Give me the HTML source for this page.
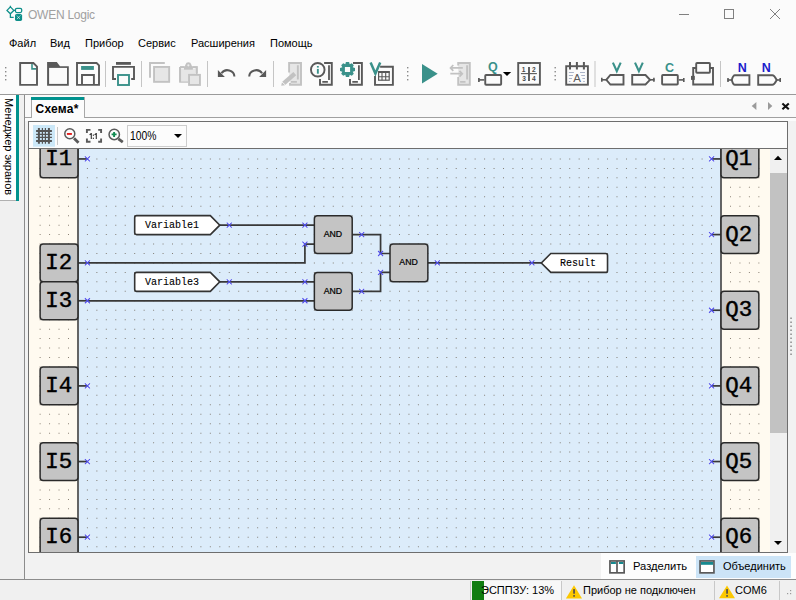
<!DOCTYPE html>
<html><head><meta charset="utf-8">
<style>
html,body{margin:0;padding:0;}
body{width:796px;height:600px;overflow:hidden;position:relative;background:#f0f0f0;font-family:"Liberation Sans",sans-serif;font-size:11px;color:#000;}
.a{position:absolute;white-space:nowrap;}
svg{position:absolute;left:0;top:0;}
.and{font-family:"Liberation Sans",sans-serif;font-size:9.4px;text-anchor:middle;fill:#000;stroke:#000;stroke-width:0.25px;}
.io{font-family:"Liberation Mono",monospace;font-size:21.6px;text-anchor:middle;fill:#000;stroke:#000;stroke-width:0.4px;}
.var{font-family:"Liberation Mono",monospace;font-size:10px;fill:#000;stroke:#000;stroke-width:0.1px;}
</style></head><body>
<!-- top chrome bg -->
<div class="a" style="left:0;top:0;width:796px;height:94px;background:#fbfbfb"></div>
<div class="a" style="left:0;top:93.8px;width:796px;height:1.4px;background:#9a9a9a"></div>
<!-- title -->
<div class="a" style="left:28px;top:8px;font-size:12px;color:#a0a0a0;letter-spacing:-0.25px">OWEN Logic</div>
<!-- menu -->
<div class="a" style="left:9px;top:37px">Файл</div>
<div class="a" style="left:50px;top:37px">Вид</div>
<div class="a" style="left:85px;top:37px">Прибор</div>
<div class="a" style="left:138px;top:37px">Сервис</div>
<div class="a" style="left:191px;top:37px">Расширения</div>
<div class="a" style="left:270px;top:37px">Помощь</div>

<!-- left side panel tab -->
<div class="a" style="left:0;top:95px;width:16px;height:105px;background:#fff;border-bottom:1px solid #b0b0b0"></div>
<div class="a" style="left:16px;top:95px;width:3px;height:106px;background:#00928e"></div>
<div class="a" style="left:3.2px;top:98px;width:12px;height:98px;"><div style="position:absolute;left:12px;top:0;transform-origin:0 0;transform:rotate(90deg);font-size:11px;white-space:nowrap">Менеджер экранов</div></div>

<!-- document area -->
<div class="a" style="left:23.6px;top:95px;width:772px;height:484.5px;background:#f2f2f2;border-left:1.2px solid #8c8c8c"></div>
<!-- tab strip -->
<div class="a" style="left:25px;top:95px;width:771px;height:22px;background:#f9f9f9"></div>
<div class="a" style="left:25px;top:117px;width:771px;height:1px;background:#a0a0a0"></div>
<div class="a" style="left:25px;top:118px;width:771px;height:3px;background:#fcfcfc"></div>
<!-- tab -->
<div class="a" style="left:31px;top:97px;width:52px;height:21px;background:#fcfcfc;border-right:1px solid #a8a8a8;border-left:1px solid #a8a8a8"></div>
<div class="a" style="left:31px;top:97px;width:53px;height:3px;background:#00928e"></div>
<div class="a" style="left:35.5px;top:101.7px;font-weight:bold;font-size:12px;letter-spacing:0.25px">Схема*</div>

<!-- inner frame -->
<div class="a" style="left:28px;top:121px;width:758px;height:430px;border:1px solid #6e6e6e;background:#fcfcfc"></div>
<div class="a" style="left:29px;top:148px;width:758px;height:1px;background:#6e6e6e"></div>
<!-- canvas columns -->
<div class="a" style="left:29px;top:149px;width:49px;height:403px;background:#fffaf0"></div>
<div class="a" style="left:78px;top:149px;width:643px;height:403px;background:#dcecfa"></div>
<div class="a" style="left:721px;top:149px;width:49px;height:403px;background:#fffaf0"></div>
<div class="a" style="left:770px;top:149px;width:17px;height:403px;background:#f0f0f0"></div>
<div class="a" style="left:770px;top:173px;width:17px;height:260px;background:#c2c2c2"></div>

<svg width="796" height="600" viewBox="0 0 796 600">
<defs><clipPath id="cv"><rect x="29" y="149" width="741" height="403"/></clipPath></defs>
<g clip-path="url(#cv)">
<line x1="78" y1="149" x2="78" y2="552" stroke="#555" stroke-width="1.8"/>
<line x1="721" y1="149" x2="721" y2="552" stroke="#555" stroke-width="1.8"/>
<path d="M86.9 158.43h1v1h-1zM86.9 167.89h1v1h-1zM86.9 177.34h1v1h-1zM86.9 186.8h1v1h-1zM86.9 196.26h1v1h-1zM86.9 205.71h1v1h-1zM86.9 215.17h1v1h-1zM86.9 224.63h1v1h-1zM86.9 234.09h1v1h-1zM86.9 243.54h1v1h-1zM86.9 253h1v1h-1zM86.9 262.46h1v1h-1zM86.9 271.91h1v1h-1zM86.9 281.37h1v1h-1zM86.9 290.83h1v1h-1zM86.9 300.28h1v1h-1zM86.9 309.74h1v1h-1zM86.9 319.2h1v1h-1zM86.9 328.66h1v1h-1zM86.9 338.11h1v1h-1zM86.9 347.57h1v1h-1zM86.9 357.03h1v1h-1zM86.9 366.48h1v1h-1zM86.9 375.94h1v1h-1zM86.9 385.4h1v1h-1zM86.9 394.85h1v1h-1zM86.9 404.31h1v1h-1zM86.9 413.77h1v1h-1zM86.9 423.23h1v1h-1zM86.9 432.68h1v1h-1zM86.9 442.14h1v1h-1zM86.9 451.6h1v1h-1zM86.9 461.05h1v1h-1zM86.9 470.51h1v1h-1zM86.9 479.97h1v1h-1zM86.9 489.42h1v1h-1zM86.9 498.88h1v1h-1zM86.9 508.34h1v1h-1zM86.9 517.8h1v1h-1zM86.9 527.25h1v1h-1zM86.9 536.71h1v1h-1zM86.9 546.17h1v1h-1zM96.36 158.43h1v1h-1zM96.36 167.89h1v1h-1zM96.36 177.34h1v1h-1zM96.36 186.8h1v1h-1zM96.36 196.26h1v1h-1zM96.36 205.71h1v1h-1zM96.36 215.17h1v1h-1zM96.36 224.63h1v1h-1zM96.36 234.09h1v1h-1zM96.36 243.54h1v1h-1zM96.36 253h1v1h-1zM96.36 262.46h1v1h-1zM96.36 271.91h1v1h-1zM96.36 281.37h1v1h-1zM96.36 290.83h1v1h-1zM96.36 300.28h1v1h-1zM96.36 309.74h1v1h-1zM96.36 319.2h1v1h-1zM96.36 328.66h1v1h-1zM96.36 338.11h1v1h-1zM96.36 347.57h1v1h-1zM96.36 357.03h1v1h-1zM96.36 366.48h1v1h-1zM96.36 375.94h1v1h-1zM96.36 385.4h1v1h-1zM96.36 394.85h1v1h-1zM96.36 404.31h1v1h-1zM96.36 413.77h1v1h-1zM96.36 423.23h1v1h-1zM96.36 432.68h1v1h-1zM96.36 442.14h1v1h-1zM96.36 451.6h1v1h-1zM96.36 461.05h1v1h-1zM96.36 470.51h1v1h-1zM96.36 479.97h1v1h-1zM96.36 489.42h1v1h-1zM96.36 498.88h1v1h-1zM96.36 508.34h1v1h-1zM96.36 517.8h1v1h-1zM96.36 527.25h1v1h-1zM96.36 536.71h1v1h-1zM96.36 546.17h1v1h-1zM105.81 158.43h1v1h-1zM105.81 167.89h1v1h-1zM105.81 177.34h1v1h-1zM105.81 186.8h1v1h-1zM105.81 196.26h1v1h-1zM105.81 205.71h1v1h-1zM105.81 215.17h1v1h-1zM105.81 224.63h1v1h-1zM105.81 234.09h1v1h-1zM105.81 243.54h1v1h-1zM105.81 253h1v1h-1zM105.81 262.46h1v1h-1zM105.81 271.91h1v1h-1zM105.81 281.37h1v1h-1zM105.81 290.83h1v1h-1zM105.81 300.28h1v1h-1zM105.81 309.74h1v1h-1zM105.81 319.2h1v1h-1zM105.81 328.66h1v1h-1zM105.81 338.11h1v1h-1zM105.81 347.57h1v1h-1zM105.81 357.03h1v1h-1zM105.81 366.48h1v1h-1zM105.81 375.94h1v1h-1zM105.81 385.4h1v1h-1zM105.81 394.85h1v1h-1zM105.81 404.31h1v1h-1zM105.81 413.77h1v1h-1zM105.81 423.23h1v1h-1zM105.81 432.68h1v1h-1zM105.81 442.14h1v1h-1zM105.81 451.6h1v1h-1zM105.81 461.05h1v1h-1zM105.81 470.51h1v1h-1zM105.81 479.97h1v1h-1zM105.81 489.42h1v1h-1zM105.81 498.88h1v1h-1zM105.81 508.34h1v1h-1zM105.81 517.8h1v1h-1zM105.81 527.25h1v1h-1zM105.81 536.71h1v1h-1zM105.81 546.17h1v1h-1zM115.27 158.43h1v1h-1zM115.27 167.89h1v1h-1zM115.27 177.34h1v1h-1zM115.27 186.8h1v1h-1zM115.27 196.26h1v1h-1zM115.27 205.71h1v1h-1zM115.27 215.17h1v1h-1zM115.27 224.63h1v1h-1zM115.27 234.09h1v1h-1zM115.27 243.54h1v1h-1zM115.27 253h1v1h-1zM115.27 262.46h1v1h-1zM115.27 271.91h1v1h-1zM115.27 281.37h1v1h-1zM115.27 290.83h1v1h-1zM115.27 300.28h1v1h-1zM115.27 309.74h1v1h-1zM115.27 319.2h1v1h-1zM115.27 328.66h1v1h-1zM115.27 338.11h1v1h-1zM115.27 347.57h1v1h-1zM115.27 357.03h1v1h-1zM115.27 366.48h1v1h-1zM115.27 375.94h1v1h-1zM115.27 385.4h1v1h-1zM115.27 394.85h1v1h-1zM115.27 404.31h1v1h-1zM115.27 413.77h1v1h-1zM115.27 423.23h1v1h-1zM115.27 432.68h1v1h-1zM115.27 442.14h1v1h-1zM115.27 451.6h1v1h-1zM115.27 461.05h1v1h-1zM115.27 470.51h1v1h-1zM115.27 479.97h1v1h-1zM115.27 489.42h1v1h-1zM115.27 498.88h1v1h-1zM115.27 508.34h1v1h-1zM115.27 517.8h1v1h-1zM115.27 527.25h1v1h-1zM115.27 536.71h1v1h-1zM115.27 546.17h1v1h-1zM124.73 158.43h1v1h-1zM124.73 167.89h1v1h-1zM124.73 177.34h1v1h-1zM124.73 186.8h1v1h-1zM124.73 196.26h1v1h-1zM124.73 205.71h1v1h-1zM124.73 215.17h1v1h-1zM124.73 224.63h1v1h-1zM124.73 234.09h1v1h-1zM124.73 243.54h1v1h-1zM124.73 253h1v1h-1zM124.73 262.46h1v1h-1zM124.73 271.91h1v1h-1zM124.73 281.37h1v1h-1zM124.73 290.83h1v1h-1zM124.73 300.28h1v1h-1zM124.73 309.74h1v1h-1zM124.73 319.2h1v1h-1zM124.73 328.66h1v1h-1zM124.73 338.11h1v1h-1zM124.73 347.57h1v1h-1zM124.73 357.03h1v1h-1zM124.73 366.48h1v1h-1zM124.73 375.94h1v1h-1zM124.73 385.4h1v1h-1zM124.73 394.85h1v1h-1zM124.73 404.31h1v1h-1zM124.73 413.77h1v1h-1zM124.73 423.23h1v1h-1zM124.73 432.68h1v1h-1zM124.73 442.14h1v1h-1zM124.73 451.6h1v1h-1zM124.73 461.05h1v1h-1zM124.73 470.51h1v1h-1zM124.73 479.97h1v1h-1zM124.73 489.42h1v1h-1zM124.73 498.88h1v1h-1zM124.73 508.34h1v1h-1zM124.73 517.8h1v1h-1zM124.73 527.25h1v1h-1zM124.73 536.71h1v1h-1zM124.73 546.17h1v1h-1zM134.19 158.43h1v1h-1zM134.19 167.89h1v1h-1zM134.19 177.34h1v1h-1zM134.19 186.8h1v1h-1zM134.19 196.26h1v1h-1zM134.19 205.71h1v1h-1zM134.19 215.17h1v1h-1zM134.19 224.63h1v1h-1zM134.19 234.09h1v1h-1zM134.19 243.54h1v1h-1zM134.19 253h1v1h-1zM134.19 262.46h1v1h-1zM134.19 271.91h1v1h-1zM134.19 281.37h1v1h-1zM134.19 290.83h1v1h-1zM134.19 300.28h1v1h-1zM134.19 309.74h1v1h-1zM134.19 319.2h1v1h-1zM134.19 328.66h1v1h-1zM134.19 338.11h1v1h-1zM134.19 347.57h1v1h-1zM134.19 357.03h1v1h-1zM134.19 366.48h1v1h-1zM134.19 375.94h1v1h-1zM134.19 385.4h1v1h-1zM134.19 394.85h1v1h-1zM134.19 404.31h1v1h-1zM134.19 413.77h1v1h-1zM134.19 423.23h1v1h-1zM134.19 432.68h1v1h-1zM134.19 442.14h1v1h-1zM134.19 451.6h1v1h-1zM134.19 461.05h1v1h-1zM134.19 470.51h1v1h-1zM134.19 479.97h1v1h-1zM134.19 489.42h1v1h-1zM134.19 498.88h1v1h-1zM134.19 508.34h1v1h-1zM134.19 517.8h1v1h-1zM134.19 527.25h1v1h-1zM134.19 536.71h1v1h-1zM134.19 546.17h1v1h-1zM143.64 158.43h1v1h-1zM143.64 167.89h1v1h-1zM143.64 177.34h1v1h-1zM143.64 186.8h1v1h-1zM143.64 196.26h1v1h-1zM143.64 205.71h1v1h-1zM143.64 215.17h1v1h-1zM143.64 224.63h1v1h-1zM143.64 234.09h1v1h-1zM143.64 243.54h1v1h-1zM143.64 253h1v1h-1zM143.64 262.46h1v1h-1zM143.64 271.91h1v1h-1zM143.64 281.37h1v1h-1zM143.64 290.83h1v1h-1zM143.64 300.28h1v1h-1zM143.64 309.74h1v1h-1zM143.64 319.2h1v1h-1zM143.64 328.66h1v1h-1zM143.64 338.11h1v1h-1zM143.64 347.57h1v1h-1zM143.64 357.03h1v1h-1zM143.64 366.48h1v1h-1zM143.64 375.94h1v1h-1zM143.64 385.4h1v1h-1zM143.64 394.85h1v1h-1zM143.64 404.31h1v1h-1zM143.64 413.77h1v1h-1zM143.64 423.23h1v1h-1zM143.64 432.68h1v1h-1zM143.64 442.14h1v1h-1zM143.64 451.6h1v1h-1zM143.64 461.05h1v1h-1zM143.64 470.51h1v1h-1zM143.64 479.97h1v1h-1zM143.64 489.42h1v1h-1zM143.64 498.88h1v1h-1zM143.64 508.34h1v1h-1zM143.64 517.8h1v1h-1zM143.64 527.25h1v1h-1zM143.64 536.71h1v1h-1zM143.64 546.17h1v1h-1zM153.1 158.43h1v1h-1zM153.1 167.89h1v1h-1zM153.1 177.34h1v1h-1zM153.1 186.8h1v1h-1zM153.1 196.26h1v1h-1zM153.1 205.71h1v1h-1zM153.1 215.17h1v1h-1zM153.1 224.63h1v1h-1zM153.1 234.09h1v1h-1zM153.1 243.54h1v1h-1zM153.1 253h1v1h-1zM153.1 262.46h1v1h-1zM153.1 271.91h1v1h-1zM153.1 281.37h1v1h-1zM153.1 290.83h1v1h-1zM153.1 300.28h1v1h-1zM153.1 309.74h1v1h-1zM153.1 319.2h1v1h-1zM153.1 328.66h1v1h-1zM153.1 338.11h1v1h-1zM153.1 347.57h1v1h-1zM153.1 357.03h1v1h-1zM153.1 366.48h1v1h-1zM153.1 375.94h1v1h-1zM153.1 385.4h1v1h-1zM153.1 394.85h1v1h-1zM153.1 404.31h1v1h-1zM153.1 413.77h1v1h-1zM153.1 423.23h1v1h-1zM153.1 432.68h1v1h-1zM153.1 442.14h1v1h-1zM153.1 451.6h1v1h-1zM153.1 461.05h1v1h-1zM153.1 470.51h1v1h-1zM153.1 479.97h1v1h-1zM153.1 489.42h1v1h-1zM153.1 498.88h1v1h-1zM153.1 508.34h1v1h-1zM153.1 517.8h1v1h-1zM153.1 527.25h1v1h-1zM153.1 536.71h1v1h-1zM153.1 546.17h1v1h-1zM162.56 158.43h1v1h-1zM162.56 167.89h1v1h-1zM162.56 177.34h1v1h-1zM162.56 186.8h1v1h-1zM162.56 196.26h1v1h-1zM162.56 205.71h1v1h-1zM162.56 215.17h1v1h-1zM162.56 224.63h1v1h-1zM162.56 234.09h1v1h-1zM162.56 243.54h1v1h-1zM162.56 253h1v1h-1zM162.56 262.46h1v1h-1zM162.56 271.91h1v1h-1zM162.56 281.37h1v1h-1zM162.56 290.83h1v1h-1zM162.56 300.28h1v1h-1zM162.56 309.74h1v1h-1zM162.56 319.2h1v1h-1zM162.56 328.66h1v1h-1zM162.56 338.11h1v1h-1zM162.56 347.57h1v1h-1zM162.56 357.03h1v1h-1zM162.56 366.48h1v1h-1zM162.56 375.94h1v1h-1zM162.56 385.4h1v1h-1zM162.56 394.85h1v1h-1zM162.56 404.31h1v1h-1zM162.56 413.77h1v1h-1zM162.56 423.23h1v1h-1zM162.56 432.68h1v1h-1zM162.56 442.14h1v1h-1zM162.56 451.6h1v1h-1zM162.56 461.05h1v1h-1zM162.56 470.51h1v1h-1zM162.56 479.97h1v1h-1zM162.56 489.42h1v1h-1zM162.56 498.88h1v1h-1zM162.56 508.34h1v1h-1zM162.56 517.8h1v1h-1zM162.56 527.25h1v1h-1zM162.56 536.71h1v1h-1zM162.56 546.17h1v1h-1zM172.01 158.43h1v1h-1zM172.01 167.89h1v1h-1zM172.01 177.34h1v1h-1zM172.01 186.8h1v1h-1zM172.01 196.26h1v1h-1zM172.01 205.71h1v1h-1zM172.01 215.17h1v1h-1zM172.01 224.63h1v1h-1zM172.01 234.09h1v1h-1zM172.01 243.54h1v1h-1zM172.01 253h1v1h-1zM172.01 262.46h1v1h-1zM172.01 271.91h1v1h-1zM172.01 281.37h1v1h-1zM172.01 290.83h1v1h-1zM172.01 300.28h1v1h-1zM172.01 309.74h1v1h-1zM172.01 319.2h1v1h-1zM172.01 328.66h1v1h-1zM172.01 338.11h1v1h-1zM172.01 347.57h1v1h-1zM172.01 357.03h1v1h-1zM172.01 366.48h1v1h-1zM172.01 375.94h1v1h-1zM172.01 385.4h1v1h-1zM172.01 394.85h1v1h-1zM172.01 404.31h1v1h-1zM172.01 413.77h1v1h-1zM172.01 423.23h1v1h-1zM172.01 432.68h1v1h-1zM172.01 442.14h1v1h-1zM172.01 451.6h1v1h-1zM172.01 461.05h1v1h-1zM172.01 470.51h1v1h-1zM172.01 479.97h1v1h-1zM172.01 489.42h1v1h-1zM172.01 498.88h1v1h-1zM172.01 508.34h1v1h-1zM172.01 517.8h1v1h-1zM172.01 527.25h1v1h-1zM172.01 536.71h1v1h-1zM172.01 546.17h1v1h-1zM181.47 158.43h1v1h-1zM181.47 167.89h1v1h-1zM181.47 177.34h1v1h-1zM181.47 186.8h1v1h-1zM181.47 196.26h1v1h-1zM181.47 205.71h1v1h-1zM181.47 215.17h1v1h-1zM181.47 224.63h1v1h-1zM181.47 234.09h1v1h-1zM181.47 243.54h1v1h-1zM181.47 253h1v1h-1zM181.47 262.46h1v1h-1zM181.47 271.91h1v1h-1zM181.47 281.37h1v1h-1zM181.47 290.83h1v1h-1zM181.47 300.28h1v1h-1zM181.47 309.74h1v1h-1zM181.47 319.2h1v1h-1zM181.47 328.66h1v1h-1zM181.47 338.11h1v1h-1zM181.47 347.57h1v1h-1zM181.47 357.03h1v1h-1zM181.47 366.48h1v1h-1zM181.47 375.94h1v1h-1zM181.47 385.4h1v1h-1zM181.47 394.85h1v1h-1zM181.47 404.31h1v1h-1zM181.47 413.77h1v1h-1zM181.47 423.23h1v1h-1zM181.47 432.68h1v1h-1zM181.47 442.14h1v1h-1zM181.47 451.6h1v1h-1zM181.47 461.05h1v1h-1zM181.47 470.51h1v1h-1zM181.47 479.97h1v1h-1zM181.47 489.42h1v1h-1zM181.47 498.88h1v1h-1zM181.47 508.34h1v1h-1zM181.47 517.8h1v1h-1zM181.47 527.25h1v1h-1zM181.47 536.71h1v1h-1zM181.47 546.17h1v1h-1zM190.93 158.43h1v1h-1zM190.93 167.89h1v1h-1zM190.93 177.34h1v1h-1zM190.93 186.8h1v1h-1zM190.93 196.26h1v1h-1zM190.93 205.71h1v1h-1zM190.93 215.17h1v1h-1zM190.93 224.63h1v1h-1zM190.93 234.09h1v1h-1zM190.93 243.54h1v1h-1zM190.93 253h1v1h-1zM190.93 262.46h1v1h-1zM190.93 271.91h1v1h-1zM190.93 281.37h1v1h-1zM190.93 290.83h1v1h-1zM190.93 300.28h1v1h-1zM190.93 309.74h1v1h-1zM190.93 319.2h1v1h-1zM190.93 328.66h1v1h-1zM190.93 338.11h1v1h-1zM190.93 347.57h1v1h-1zM190.93 357.03h1v1h-1zM190.93 366.48h1v1h-1zM190.93 375.94h1v1h-1zM190.93 385.4h1v1h-1zM190.93 394.85h1v1h-1zM190.93 404.31h1v1h-1zM190.93 413.77h1v1h-1zM190.93 423.23h1v1h-1zM190.93 432.68h1v1h-1zM190.93 442.14h1v1h-1zM190.93 451.6h1v1h-1zM190.93 461.05h1v1h-1zM190.93 470.51h1v1h-1zM190.93 479.97h1v1h-1zM190.93 489.42h1v1h-1zM190.93 498.88h1v1h-1zM190.93 508.34h1v1h-1zM190.93 517.8h1v1h-1zM190.93 527.25h1v1h-1zM190.93 536.71h1v1h-1zM190.93 546.17h1v1h-1zM200.38 158.43h1v1h-1zM200.38 167.89h1v1h-1zM200.38 177.34h1v1h-1zM200.38 186.8h1v1h-1zM200.38 196.26h1v1h-1zM200.38 205.71h1v1h-1zM200.38 215.17h1v1h-1zM200.38 224.63h1v1h-1zM200.38 234.09h1v1h-1zM200.38 243.54h1v1h-1zM200.38 253h1v1h-1zM200.38 262.46h1v1h-1zM200.38 271.91h1v1h-1zM200.38 281.37h1v1h-1zM200.38 290.83h1v1h-1zM200.38 300.28h1v1h-1zM200.38 309.74h1v1h-1zM200.38 319.2h1v1h-1zM200.38 328.66h1v1h-1zM200.38 338.11h1v1h-1zM200.38 347.57h1v1h-1zM200.38 357.03h1v1h-1zM200.38 366.48h1v1h-1zM200.38 375.94h1v1h-1zM200.38 385.4h1v1h-1zM200.38 394.85h1v1h-1zM200.38 404.31h1v1h-1zM200.38 413.77h1v1h-1zM200.38 423.23h1v1h-1zM200.38 432.68h1v1h-1zM200.38 442.14h1v1h-1zM200.38 451.6h1v1h-1zM200.38 461.05h1v1h-1zM200.38 470.51h1v1h-1zM200.38 479.97h1v1h-1zM200.38 489.42h1v1h-1zM200.38 498.88h1v1h-1zM200.38 508.34h1v1h-1zM200.38 517.8h1v1h-1zM200.38 527.25h1v1h-1zM200.38 536.71h1v1h-1zM200.38 546.17h1v1h-1zM209.84 158.43h1v1h-1zM209.84 167.89h1v1h-1zM209.84 177.34h1v1h-1zM209.84 186.8h1v1h-1zM209.84 196.26h1v1h-1zM209.84 205.71h1v1h-1zM209.84 215.17h1v1h-1zM209.84 224.63h1v1h-1zM209.84 234.09h1v1h-1zM209.84 243.54h1v1h-1zM209.84 253h1v1h-1zM209.84 262.46h1v1h-1zM209.84 271.91h1v1h-1zM209.84 281.37h1v1h-1zM209.84 290.83h1v1h-1zM209.84 300.28h1v1h-1zM209.84 309.74h1v1h-1zM209.84 319.2h1v1h-1zM209.84 328.66h1v1h-1zM209.84 338.11h1v1h-1zM209.84 347.57h1v1h-1zM209.84 357.03h1v1h-1zM209.84 366.48h1v1h-1zM209.84 375.94h1v1h-1zM209.84 385.4h1v1h-1zM209.84 394.85h1v1h-1zM209.84 404.31h1v1h-1zM209.84 413.77h1v1h-1zM209.84 423.23h1v1h-1zM209.84 432.68h1v1h-1zM209.84 442.14h1v1h-1zM209.84 451.6h1v1h-1zM209.84 461.05h1v1h-1zM209.84 470.51h1v1h-1zM209.84 479.97h1v1h-1zM209.84 489.42h1v1h-1zM209.84 498.88h1v1h-1zM209.84 508.34h1v1h-1zM209.84 517.8h1v1h-1zM209.84 527.25h1v1h-1zM209.84 536.71h1v1h-1zM209.84 546.17h1v1h-1zM219.3 158.43h1v1h-1zM219.3 167.89h1v1h-1zM219.3 177.34h1v1h-1zM219.3 186.8h1v1h-1zM219.3 196.26h1v1h-1zM219.3 205.71h1v1h-1zM219.3 215.17h1v1h-1zM219.3 224.63h1v1h-1zM219.3 234.09h1v1h-1zM219.3 243.54h1v1h-1zM219.3 253h1v1h-1zM219.3 262.46h1v1h-1zM219.3 271.91h1v1h-1zM219.3 281.37h1v1h-1zM219.3 290.83h1v1h-1zM219.3 300.28h1v1h-1zM219.3 309.74h1v1h-1zM219.3 319.2h1v1h-1zM219.3 328.66h1v1h-1zM219.3 338.11h1v1h-1zM219.3 347.57h1v1h-1zM219.3 357.03h1v1h-1zM219.3 366.48h1v1h-1zM219.3 375.94h1v1h-1zM219.3 385.4h1v1h-1zM219.3 394.85h1v1h-1zM219.3 404.31h1v1h-1zM219.3 413.77h1v1h-1zM219.3 423.23h1v1h-1zM219.3 432.68h1v1h-1zM219.3 442.14h1v1h-1zM219.3 451.6h1v1h-1zM219.3 461.05h1v1h-1zM219.3 470.51h1v1h-1zM219.3 479.97h1v1h-1zM219.3 489.42h1v1h-1zM219.3 498.88h1v1h-1zM219.3 508.34h1v1h-1zM219.3 517.8h1v1h-1zM219.3 527.25h1v1h-1zM219.3 536.71h1v1h-1zM219.3 546.17h1v1h-1zM228.76 158.43h1v1h-1zM228.76 167.89h1v1h-1zM228.76 177.34h1v1h-1zM228.76 186.8h1v1h-1zM228.76 196.26h1v1h-1zM228.76 205.71h1v1h-1zM228.76 215.17h1v1h-1zM228.76 224.63h1v1h-1zM228.76 234.09h1v1h-1zM228.76 243.54h1v1h-1zM228.76 253h1v1h-1zM228.76 262.46h1v1h-1zM228.76 271.91h1v1h-1zM228.76 281.37h1v1h-1zM228.76 290.83h1v1h-1zM228.76 300.28h1v1h-1zM228.76 309.74h1v1h-1zM228.76 319.2h1v1h-1zM228.76 328.66h1v1h-1zM228.76 338.11h1v1h-1zM228.76 347.57h1v1h-1zM228.76 357.03h1v1h-1zM228.76 366.48h1v1h-1zM228.76 375.94h1v1h-1zM228.76 385.4h1v1h-1zM228.76 394.85h1v1h-1zM228.76 404.31h1v1h-1zM228.76 413.77h1v1h-1zM228.76 423.23h1v1h-1zM228.76 432.68h1v1h-1zM228.76 442.14h1v1h-1zM228.76 451.6h1v1h-1zM228.76 461.05h1v1h-1zM228.76 470.51h1v1h-1zM228.76 479.97h1v1h-1zM228.76 489.42h1v1h-1zM228.76 498.88h1v1h-1zM228.76 508.34h1v1h-1zM228.76 517.8h1v1h-1zM228.76 527.25h1v1h-1zM228.76 536.71h1v1h-1zM228.76 546.17h1v1h-1zM238.21 158.43h1v1h-1zM238.21 167.89h1v1h-1zM238.21 177.34h1v1h-1zM238.21 186.8h1v1h-1zM238.21 196.26h1v1h-1zM238.21 205.71h1v1h-1zM238.21 215.17h1v1h-1zM238.21 224.63h1v1h-1zM238.21 234.09h1v1h-1zM238.21 243.54h1v1h-1zM238.21 253h1v1h-1zM238.21 262.46h1v1h-1zM238.21 271.91h1v1h-1zM238.21 281.37h1v1h-1zM238.21 290.83h1v1h-1zM238.21 300.28h1v1h-1zM238.21 309.74h1v1h-1zM238.21 319.2h1v1h-1zM238.21 328.66h1v1h-1zM238.21 338.11h1v1h-1zM238.21 347.57h1v1h-1zM238.21 357.03h1v1h-1zM238.21 366.48h1v1h-1zM238.21 375.94h1v1h-1zM238.21 385.4h1v1h-1zM238.21 394.85h1v1h-1zM238.21 404.31h1v1h-1zM238.21 413.77h1v1h-1zM238.21 423.23h1v1h-1zM238.21 432.68h1v1h-1zM238.21 442.14h1v1h-1zM238.21 451.6h1v1h-1zM238.21 461.05h1v1h-1zM238.21 470.51h1v1h-1zM238.21 479.97h1v1h-1zM238.21 489.42h1v1h-1zM238.21 498.88h1v1h-1zM238.21 508.34h1v1h-1zM238.21 517.8h1v1h-1zM238.21 527.25h1v1h-1zM238.21 536.71h1v1h-1zM238.21 546.17h1v1h-1zM247.67 158.43h1v1h-1zM247.67 167.89h1v1h-1zM247.67 177.34h1v1h-1zM247.67 186.8h1v1h-1zM247.67 196.26h1v1h-1zM247.67 205.71h1v1h-1zM247.67 215.17h1v1h-1zM247.67 224.63h1v1h-1zM247.67 234.09h1v1h-1zM247.67 243.54h1v1h-1zM247.67 253h1v1h-1zM247.67 262.46h1v1h-1zM247.67 271.91h1v1h-1zM247.67 281.37h1v1h-1zM247.67 290.83h1v1h-1zM247.67 300.28h1v1h-1zM247.67 309.74h1v1h-1zM247.67 319.2h1v1h-1zM247.67 328.66h1v1h-1zM247.67 338.11h1v1h-1zM247.67 347.57h1v1h-1zM247.67 357.03h1v1h-1zM247.67 366.48h1v1h-1zM247.67 375.94h1v1h-1zM247.67 385.4h1v1h-1zM247.67 394.85h1v1h-1zM247.67 404.31h1v1h-1zM247.67 413.77h1v1h-1zM247.67 423.23h1v1h-1zM247.67 432.68h1v1h-1zM247.67 442.14h1v1h-1zM247.67 451.6h1v1h-1zM247.67 461.05h1v1h-1zM247.67 470.51h1v1h-1zM247.67 479.97h1v1h-1zM247.67 489.42h1v1h-1zM247.67 498.88h1v1h-1zM247.67 508.34h1v1h-1zM247.67 517.8h1v1h-1zM247.67 527.25h1v1h-1zM247.67 536.71h1v1h-1zM247.67 546.17h1v1h-1zM257.13 158.43h1v1h-1zM257.13 167.89h1v1h-1zM257.13 177.34h1v1h-1zM257.13 186.8h1v1h-1zM257.13 196.26h1v1h-1zM257.13 205.71h1v1h-1zM257.13 215.17h1v1h-1zM257.13 224.63h1v1h-1zM257.13 234.09h1v1h-1zM257.13 243.54h1v1h-1zM257.13 253h1v1h-1zM257.13 262.46h1v1h-1zM257.13 271.91h1v1h-1zM257.13 281.37h1v1h-1zM257.13 290.83h1v1h-1zM257.13 300.28h1v1h-1zM257.13 309.74h1v1h-1zM257.13 319.2h1v1h-1zM257.13 328.66h1v1h-1zM257.13 338.11h1v1h-1zM257.13 347.57h1v1h-1zM257.13 357.03h1v1h-1zM257.13 366.48h1v1h-1zM257.13 375.94h1v1h-1zM257.13 385.4h1v1h-1zM257.13 394.85h1v1h-1zM257.13 404.31h1v1h-1zM257.13 413.77h1v1h-1zM257.13 423.23h1v1h-1zM257.13 432.68h1v1h-1zM257.13 442.14h1v1h-1zM257.13 451.6h1v1h-1zM257.13 461.05h1v1h-1zM257.13 470.51h1v1h-1zM257.13 479.97h1v1h-1zM257.13 489.42h1v1h-1zM257.13 498.88h1v1h-1zM257.13 508.34h1v1h-1zM257.13 517.8h1v1h-1zM257.13 527.25h1v1h-1zM257.13 536.71h1v1h-1zM257.13 546.17h1v1h-1zM266.58 158.43h1v1h-1zM266.58 167.89h1v1h-1zM266.58 177.34h1v1h-1zM266.58 186.8h1v1h-1zM266.58 196.26h1v1h-1zM266.58 205.71h1v1h-1zM266.58 215.17h1v1h-1zM266.58 224.63h1v1h-1zM266.58 234.09h1v1h-1zM266.58 243.54h1v1h-1zM266.58 253h1v1h-1zM266.58 262.46h1v1h-1zM266.58 271.91h1v1h-1zM266.58 281.37h1v1h-1zM266.58 290.83h1v1h-1zM266.58 300.28h1v1h-1zM266.58 309.74h1v1h-1zM266.58 319.2h1v1h-1zM266.58 328.66h1v1h-1zM266.58 338.11h1v1h-1zM266.58 347.57h1v1h-1zM266.58 357.03h1v1h-1zM266.58 366.48h1v1h-1zM266.58 375.94h1v1h-1zM266.58 385.4h1v1h-1zM266.58 394.85h1v1h-1zM266.58 404.31h1v1h-1zM266.58 413.77h1v1h-1zM266.58 423.23h1v1h-1zM266.58 432.68h1v1h-1zM266.58 442.14h1v1h-1zM266.58 451.6h1v1h-1zM266.58 461.05h1v1h-1zM266.58 470.51h1v1h-1zM266.58 479.97h1v1h-1zM266.58 489.42h1v1h-1zM266.58 498.88h1v1h-1zM266.58 508.34h1v1h-1zM266.58 517.8h1v1h-1zM266.58 527.25h1v1h-1zM266.58 536.71h1v1h-1zM266.58 546.17h1v1h-1zM276.04 158.43h1v1h-1zM276.04 167.89h1v1h-1zM276.04 177.34h1v1h-1zM276.04 186.8h1v1h-1zM276.04 196.26h1v1h-1zM276.04 205.71h1v1h-1zM276.04 215.17h1v1h-1zM276.04 224.63h1v1h-1zM276.04 234.09h1v1h-1zM276.04 243.54h1v1h-1zM276.04 253h1v1h-1zM276.04 262.46h1v1h-1zM276.04 271.91h1v1h-1zM276.04 281.37h1v1h-1zM276.04 290.83h1v1h-1zM276.04 300.28h1v1h-1zM276.04 309.74h1v1h-1zM276.04 319.2h1v1h-1zM276.04 328.66h1v1h-1zM276.04 338.11h1v1h-1zM276.04 347.57h1v1h-1zM276.04 357.03h1v1h-1zM276.04 366.48h1v1h-1zM276.04 375.94h1v1h-1zM276.04 385.4h1v1h-1zM276.04 394.85h1v1h-1zM276.04 404.31h1v1h-1zM276.04 413.77h1v1h-1zM276.04 423.23h1v1h-1zM276.04 432.68h1v1h-1zM276.04 442.14h1v1h-1zM276.04 451.6h1v1h-1zM276.04 461.05h1v1h-1zM276.04 470.51h1v1h-1zM276.04 479.97h1v1h-1zM276.04 489.42h1v1h-1zM276.04 498.88h1v1h-1zM276.04 508.34h1v1h-1zM276.04 517.8h1v1h-1zM276.04 527.25h1v1h-1zM276.04 536.71h1v1h-1zM276.04 546.17h1v1h-1zM285.5 158.43h1v1h-1zM285.5 167.89h1v1h-1zM285.5 177.34h1v1h-1zM285.5 186.8h1v1h-1zM285.5 196.26h1v1h-1zM285.5 205.71h1v1h-1zM285.5 215.17h1v1h-1zM285.5 224.63h1v1h-1zM285.5 234.09h1v1h-1zM285.5 243.54h1v1h-1zM285.5 253h1v1h-1zM285.5 262.46h1v1h-1zM285.5 271.91h1v1h-1zM285.5 281.37h1v1h-1zM285.5 290.83h1v1h-1zM285.5 300.28h1v1h-1zM285.5 309.74h1v1h-1zM285.5 319.2h1v1h-1zM285.5 328.66h1v1h-1zM285.5 338.11h1v1h-1zM285.5 347.57h1v1h-1zM285.5 357.03h1v1h-1zM285.5 366.48h1v1h-1zM285.5 375.94h1v1h-1zM285.5 385.4h1v1h-1zM285.5 394.85h1v1h-1zM285.5 404.31h1v1h-1zM285.5 413.77h1v1h-1zM285.5 423.23h1v1h-1zM285.5 432.68h1v1h-1zM285.5 442.14h1v1h-1zM285.5 451.6h1v1h-1zM285.5 461.05h1v1h-1zM285.5 470.51h1v1h-1zM285.5 479.97h1v1h-1zM285.5 489.42h1v1h-1zM285.5 498.88h1v1h-1zM285.5 508.34h1v1h-1zM285.5 517.8h1v1h-1zM285.5 527.25h1v1h-1zM285.5 536.71h1v1h-1zM285.5 546.17h1v1h-1zM294.95 158.43h1v1h-1zM294.95 167.89h1v1h-1zM294.95 177.34h1v1h-1zM294.95 186.8h1v1h-1zM294.95 196.26h1v1h-1zM294.95 205.71h1v1h-1zM294.95 215.17h1v1h-1zM294.95 224.63h1v1h-1zM294.95 234.09h1v1h-1zM294.95 243.54h1v1h-1zM294.95 253h1v1h-1zM294.95 262.46h1v1h-1zM294.95 271.91h1v1h-1zM294.95 281.37h1v1h-1zM294.95 290.83h1v1h-1zM294.95 300.28h1v1h-1zM294.95 309.74h1v1h-1zM294.95 319.2h1v1h-1zM294.95 328.66h1v1h-1zM294.95 338.11h1v1h-1zM294.95 347.57h1v1h-1zM294.95 357.03h1v1h-1zM294.95 366.48h1v1h-1zM294.95 375.94h1v1h-1zM294.95 385.4h1v1h-1zM294.95 394.85h1v1h-1zM294.95 404.31h1v1h-1zM294.95 413.77h1v1h-1zM294.95 423.23h1v1h-1zM294.95 432.68h1v1h-1zM294.95 442.14h1v1h-1zM294.95 451.6h1v1h-1zM294.95 461.05h1v1h-1zM294.95 470.51h1v1h-1zM294.95 479.97h1v1h-1zM294.95 489.42h1v1h-1zM294.95 498.88h1v1h-1zM294.95 508.34h1v1h-1zM294.95 517.8h1v1h-1zM294.95 527.25h1v1h-1zM294.95 536.71h1v1h-1zM294.95 546.17h1v1h-1zM304.41 158.43h1v1h-1zM304.41 167.89h1v1h-1zM304.41 177.34h1v1h-1zM304.41 186.8h1v1h-1zM304.41 196.26h1v1h-1zM304.41 205.71h1v1h-1zM304.41 215.17h1v1h-1zM304.41 224.63h1v1h-1zM304.41 234.09h1v1h-1zM304.41 243.54h1v1h-1zM304.41 253h1v1h-1zM304.41 262.46h1v1h-1zM304.41 271.91h1v1h-1zM304.41 281.37h1v1h-1zM304.41 290.83h1v1h-1zM304.41 300.28h1v1h-1zM304.41 309.74h1v1h-1zM304.41 319.2h1v1h-1zM304.41 328.66h1v1h-1zM304.41 338.11h1v1h-1zM304.41 347.57h1v1h-1zM304.41 357.03h1v1h-1zM304.41 366.48h1v1h-1zM304.41 375.94h1v1h-1zM304.41 385.4h1v1h-1zM304.41 394.85h1v1h-1zM304.41 404.31h1v1h-1zM304.41 413.77h1v1h-1zM304.41 423.23h1v1h-1zM304.41 432.68h1v1h-1zM304.41 442.14h1v1h-1zM304.41 451.6h1v1h-1zM304.41 461.05h1v1h-1zM304.41 470.51h1v1h-1zM304.41 479.97h1v1h-1zM304.41 489.42h1v1h-1zM304.41 498.88h1v1h-1zM304.41 508.34h1v1h-1zM304.41 517.8h1v1h-1zM304.41 527.25h1v1h-1zM304.41 536.71h1v1h-1zM304.41 546.17h1v1h-1zM313.87 158.43h1v1h-1zM313.87 167.89h1v1h-1zM313.87 177.34h1v1h-1zM313.87 186.8h1v1h-1zM313.87 196.26h1v1h-1zM313.87 205.71h1v1h-1zM313.87 215.17h1v1h-1zM313.87 224.63h1v1h-1zM313.87 234.09h1v1h-1zM313.87 243.54h1v1h-1zM313.87 253h1v1h-1zM313.87 262.46h1v1h-1zM313.87 271.91h1v1h-1zM313.87 281.37h1v1h-1zM313.87 290.83h1v1h-1zM313.87 300.28h1v1h-1zM313.87 309.74h1v1h-1zM313.87 319.2h1v1h-1zM313.87 328.66h1v1h-1zM313.87 338.11h1v1h-1zM313.87 347.57h1v1h-1zM313.87 357.03h1v1h-1zM313.87 366.48h1v1h-1zM313.87 375.94h1v1h-1zM313.87 385.4h1v1h-1zM313.87 394.85h1v1h-1zM313.87 404.31h1v1h-1zM313.87 413.77h1v1h-1zM313.87 423.23h1v1h-1zM313.87 432.68h1v1h-1zM313.87 442.14h1v1h-1zM313.87 451.6h1v1h-1zM313.87 461.05h1v1h-1zM313.87 470.51h1v1h-1zM313.87 479.97h1v1h-1zM313.87 489.42h1v1h-1zM313.87 498.88h1v1h-1zM313.87 508.34h1v1h-1zM313.87 517.8h1v1h-1zM313.87 527.25h1v1h-1zM313.87 536.71h1v1h-1zM313.87 546.17h1v1h-1zM323.33 158.43h1v1h-1zM323.33 167.89h1v1h-1zM323.33 177.34h1v1h-1zM323.33 186.8h1v1h-1zM323.33 196.26h1v1h-1zM323.33 205.71h1v1h-1zM323.33 215.17h1v1h-1zM323.33 224.63h1v1h-1zM323.33 234.09h1v1h-1zM323.33 243.54h1v1h-1zM323.33 253h1v1h-1zM323.33 262.46h1v1h-1zM323.33 271.91h1v1h-1zM323.33 281.37h1v1h-1zM323.33 290.83h1v1h-1zM323.33 300.28h1v1h-1zM323.33 309.74h1v1h-1zM323.33 319.2h1v1h-1zM323.33 328.66h1v1h-1zM323.33 338.11h1v1h-1zM323.33 347.57h1v1h-1zM323.33 357.03h1v1h-1zM323.33 366.48h1v1h-1zM323.33 375.94h1v1h-1zM323.33 385.4h1v1h-1zM323.33 394.85h1v1h-1zM323.33 404.31h1v1h-1zM323.33 413.77h1v1h-1zM323.33 423.23h1v1h-1zM323.33 432.68h1v1h-1zM323.33 442.14h1v1h-1zM323.33 451.6h1v1h-1zM323.33 461.05h1v1h-1zM323.33 470.51h1v1h-1zM323.33 479.97h1v1h-1zM323.33 489.42h1v1h-1zM323.33 498.88h1v1h-1zM323.33 508.34h1v1h-1zM323.33 517.8h1v1h-1zM323.33 527.25h1v1h-1zM323.33 536.71h1v1h-1zM323.33 546.17h1v1h-1zM332.78 158.43h1v1h-1zM332.78 167.89h1v1h-1zM332.78 177.34h1v1h-1zM332.78 186.8h1v1h-1zM332.78 196.26h1v1h-1zM332.78 205.71h1v1h-1zM332.78 215.17h1v1h-1zM332.78 224.63h1v1h-1zM332.78 234.09h1v1h-1zM332.78 243.54h1v1h-1zM332.78 253h1v1h-1zM332.78 262.46h1v1h-1zM332.78 271.91h1v1h-1zM332.78 281.37h1v1h-1zM332.78 290.83h1v1h-1zM332.78 300.28h1v1h-1zM332.78 309.74h1v1h-1zM332.78 319.2h1v1h-1zM332.78 328.66h1v1h-1zM332.78 338.11h1v1h-1zM332.78 347.57h1v1h-1zM332.78 357.03h1v1h-1zM332.78 366.48h1v1h-1zM332.78 375.94h1v1h-1zM332.78 385.4h1v1h-1zM332.78 394.85h1v1h-1zM332.78 404.31h1v1h-1zM332.78 413.77h1v1h-1zM332.78 423.23h1v1h-1zM332.78 432.68h1v1h-1zM332.78 442.14h1v1h-1zM332.78 451.6h1v1h-1zM332.78 461.05h1v1h-1zM332.78 470.51h1v1h-1zM332.78 479.97h1v1h-1zM332.78 489.42h1v1h-1zM332.78 498.88h1v1h-1zM332.78 508.34h1v1h-1zM332.78 517.8h1v1h-1zM332.78 527.25h1v1h-1zM332.78 536.71h1v1h-1zM332.78 546.17h1v1h-1zM342.24 158.43h1v1h-1zM342.24 167.89h1v1h-1zM342.24 177.34h1v1h-1zM342.24 186.8h1v1h-1zM342.24 196.26h1v1h-1zM342.24 205.71h1v1h-1zM342.24 215.17h1v1h-1zM342.24 224.63h1v1h-1zM342.24 234.09h1v1h-1zM342.24 243.54h1v1h-1zM342.24 253h1v1h-1zM342.24 262.46h1v1h-1zM342.24 271.91h1v1h-1zM342.24 281.37h1v1h-1zM342.24 290.83h1v1h-1zM342.24 300.28h1v1h-1zM342.24 309.74h1v1h-1zM342.24 319.2h1v1h-1zM342.24 328.66h1v1h-1zM342.24 338.11h1v1h-1zM342.24 347.57h1v1h-1zM342.24 357.03h1v1h-1zM342.24 366.48h1v1h-1zM342.24 375.94h1v1h-1zM342.24 385.4h1v1h-1zM342.24 394.85h1v1h-1zM342.24 404.31h1v1h-1zM342.24 413.77h1v1h-1zM342.24 423.23h1v1h-1zM342.24 432.68h1v1h-1zM342.24 442.14h1v1h-1zM342.24 451.6h1v1h-1zM342.24 461.05h1v1h-1zM342.24 470.51h1v1h-1zM342.24 479.97h1v1h-1zM342.24 489.42h1v1h-1zM342.24 498.88h1v1h-1zM342.24 508.34h1v1h-1zM342.24 517.8h1v1h-1zM342.24 527.25h1v1h-1zM342.24 536.71h1v1h-1zM342.24 546.17h1v1h-1zM351.7 158.43h1v1h-1zM351.7 167.89h1v1h-1zM351.7 177.34h1v1h-1zM351.7 186.8h1v1h-1zM351.7 196.26h1v1h-1zM351.7 205.71h1v1h-1zM351.7 215.17h1v1h-1zM351.7 224.63h1v1h-1zM351.7 234.09h1v1h-1zM351.7 243.54h1v1h-1zM351.7 253h1v1h-1zM351.7 262.46h1v1h-1zM351.7 271.91h1v1h-1zM351.7 281.37h1v1h-1zM351.7 290.83h1v1h-1zM351.7 300.28h1v1h-1zM351.7 309.74h1v1h-1zM351.7 319.2h1v1h-1zM351.7 328.66h1v1h-1zM351.7 338.11h1v1h-1zM351.7 347.57h1v1h-1zM351.7 357.03h1v1h-1zM351.7 366.48h1v1h-1zM351.7 375.94h1v1h-1zM351.7 385.4h1v1h-1zM351.7 394.85h1v1h-1zM351.7 404.31h1v1h-1zM351.7 413.77h1v1h-1zM351.7 423.23h1v1h-1zM351.7 432.68h1v1h-1zM351.7 442.14h1v1h-1zM351.7 451.6h1v1h-1zM351.7 461.05h1v1h-1zM351.7 470.51h1v1h-1zM351.7 479.97h1v1h-1zM351.7 489.42h1v1h-1zM351.7 498.88h1v1h-1zM351.7 508.34h1v1h-1zM351.7 517.8h1v1h-1zM351.7 527.25h1v1h-1zM351.7 536.71h1v1h-1zM351.7 546.17h1v1h-1zM361.15 158.43h1v1h-1zM361.15 167.89h1v1h-1zM361.15 177.34h1v1h-1zM361.15 186.8h1v1h-1zM361.15 196.26h1v1h-1zM361.15 205.71h1v1h-1zM361.15 215.17h1v1h-1zM361.15 224.63h1v1h-1zM361.15 234.09h1v1h-1zM361.15 243.54h1v1h-1zM361.15 253h1v1h-1zM361.15 262.46h1v1h-1zM361.15 271.91h1v1h-1zM361.15 281.37h1v1h-1zM361.15 290.83h1v1h-1zM361.15 300.28h1v1h-1zM361.15 309.74h1v1h-1zM361.15 319.2h1v1h-1zM361.15 328.66h1v1h-1zM361.15 338.11h1v1h-1zM361.15 347.57h1v1h-1zM361.15 357.03h1v1h-1zM361.15 366.48h1v1h-1zM361.15 375.94h1v1h-1zM361.15 385.4h1v1h-1zM361.15 394.85h1v1h-1zM361.15 404.31h1v1h-1zM361.15 413.77h1v1h-1zM361.15 423.23h1v1h-1zM361.15 432.68h1v1h-1zM361.15 442.14h1v1h-1zM361.15 451.6h1v1h-1zM361.15 461.05h1v1h-1zM361.15 470.51h1v1h-1zM361.15 479.97h1v1h-1zM361.15 489.42h1v1h-1zM361.15 498.88h1v1h-1zM361.15 508.34h1v1h-1zM361.15 517.8h1v1h-1zM361.15 527.25h1v1h-1zM361.15 536.71h1v1h-1zM361.15 546.17h1v1h-1zM370.61 158.43h1v1h-1zM370.61 167.89h1v1h-1zM370.61 177.34h1v1h-1zM370.61 186.8h1v1h-1zM370.61 196.26h1v1h-1zM370.61 205.71h1v1h-1zM370.61 215.17h1v1h-1zM370.61 224.63h1v1h-1zM370.61 234.09h1v1h-1zM370.61 243.54h1v1h-1zM370.61 253h1v1h-1zM370.61 262.46h1v1h-1zM370.61 271.91h1v1h-1zM370.61 281.37h1v1h-1zM370.61 290.83h1v1h-1zM370.61 300.28h1v1h-1zM370.61 309.74h1v1h-1zM370.61 319.2h1v1h-1zM370.61 328.66h1v1h-1zM370.61 338.11h1v1h-1zM370.61 347.57h1v1h-1zM370.61 357.03h1v1h-1zM370.61 366.48h1v1h-1zM370.61 375.94h1v1h-1zM370.61 385.4h1v1h-1zM370.61 394.85h1v1h-1zM370.61 404.31h1v1h-1zM370.61 413.77h1v1h-1zM370.61 423.23h1v1h-1zM370.61 432.68h1v1h-1zM370.61 442.14h1v1h-1zM370.61 451.6h1v1h-1zM370.61 461.05h1v1h-1zM370.61 470.51h1v1h-1zM370.61 479.97h1v1h-1zM370.61 489.42h1v1h-1zM370.61 498.88h1v1h-1zM370.61 508.34h1v1h-1zM370.61 517.8h1v1h-1zM370.61 527.25h1v1h-1zM370.61 536.71h1v1h-1zM370.61 546.17h1v1h-1zM380.07 158.43h1v1h-1zM380.07 167.89h1v1h-1zM380.07 177.34h1v1h-1zM380.07 186.8h1v1h-1zM380.07 196.26h1v1h-1zM380.07 205.71h1v1h-1zM380.07 215.17h1v1h-1zM380.07 224.63h1v1h-1zM380.07 234.09h1v1h-1zM380.07 243.54h1v1h-1zM380.07 253h1v1h-1zM380.07 262.46h1v1h-1zM380.07 271.91h1v1h-1zM380.07 281.37h1v1h-1zM380.07 290.83h1v1h-1zM380.07 300.28h1v1h-1zM380.07 309.74h1v1h-1zM380.07 319.2h1v1h-1zM380.07 328.66h1v1h-1zM380.07 338.11h1v1h-1zM380.07 347.57h1v1h-1zM380.07 357.03h1v1h-1zM380.07 366.48h1v1h-1zM380.07 375.94h1v1h-1zM380.07 385.4h1v1h-1zM380.07 394.85h1v1h-1zM380.07 404.31h1v1h-1zM380.07 413.77h1v1h-1zM380.07 423.23h1v1h-1zM380.07 432.68h1v1h-1zM380.07 442.14h1v1h-1zM380.07 451.6h1v1h-1zM380.07 461.05h1v1h-1zM380.07 470.51h1v1h-1zM380.07 479.97h1v1h-1zM380.07 489.42h1v1h-1zM380.07 498.88h1v1h-1zM380.07 508.34h1v1h-1zM380.07 517.8h1v1h-1zM380.07 527.25h1v1h-1zM380.07 536.71h1v1h-1zM380.07 546.17h1v1h-1zM389.52 158.43h1v1h-1zM389.52 167.89h1v1h-1zM389.52 177.34h1v1h-1zM389.52 186.8h1v1h-1zM389.52 196.26h1v1h-1zM389.52 205.71h1v1h-1zM389.52 215.17h1v1h-1zM389.52 224.63h1v1h-1zM389.52 234.09h1v1h-1zM389.52 243.54h1v1h-1zM389.52 253h1v1h-1zM389.52 262.46h1v1h-1zM389.52 271.91h1v1h-1zM389.52 281.37h1v1h-1zM389.52 290.83h1v1h-1zM389.52 300.28h1v1h-1zM389.52 309.74h1v1h-1zM389.52 319.2h1v1h-1zM389.52 328.66h1v1h-1zM389.52 338.11h1v1h-1zM389.52 347.57h1v1h-1zM389.52 357.03h1v1h-1zM389.52 366.48h1v1h-1zM389.52 375.94h1v1h-1zM389.52 385.4h1v1h-1zM389.52 394.85h1v1h-1zM389.52 404.31h1v1h-1zM389.52 413.77h1v1h-1zM389.52 423.23h1v1h-1zM389.52 432.68h1v1h-1zM389.52 442.14h1v1h-1zM389.52 451.6h1v1h-1zM389.52 461.05h1v1h-1zM389.52 470.51h1v1h-1zM389.52 479.97h1v1h-1zM389.52 489.42h1v1h-1zM389.52 498.88h1v1h-1zM389.52 508.34h1v1h-1zM389.52 517.8h1v1h-1zM389.52 527.25h1v1h-1zM389.52 536.71h1v1h-1zM389.52 546.17h1v1h-1zM398.98 158.43h1v1h-1zM398.98 167.89h1v1h-1zM398.98 177.34h1v1h-1zM398.98 186.8h1v1h-1zM398.98 196.26h1v1h-1zM398.98 205.71h1v1h-1zM398.98 215.17h1v1h-1zM398.98 224.63h1v1h-1zM398.98 234.09h1v1h-1zM398.98 243.54h1v1h-1zM398.98 253h1v1h-1zM398.98 262.46h1v1h-1zM398.98 271.91h1v1h-1zM398.98 281.37h1v1h-1zM398.98 290.83h1v1h-1zM398.98 300.28h1v1h-1zM398.98 309.74h1v1h-1zM398.98 319.2h1v1h-1zM398.98 328.66h1v1h-1zM398.98 338.11h1v1h-1zM398.98 347.57h1v1h-1zM398.98 357.03h1v1h-1zM398.98 366.48h1v1h-1zM398.98 375.94h1v1h-1zM398.98 385.4h1v1h-1zM398.98 394.85h1v1h-1zM398.98 404.31h1v1h-1zM398.98 413.77h1v1h-1zM398.98 423.23h1v1h-1zM398.98 432.68h1v1h-1zM398.98 442.14h1v1h-1zM398.98 451.6h1v1h-1zM398.98 461.05h1v1h-1zM398.98 470.51h1v1h-1zM398.98 479.97h1v1h-1zM398.98 489.42h1v1h-1zM398.98 498.88h1v1h-1zM398.98 508.34h1v1h-1zM398.98 517.8h1v1h-1zM398.98 527.25h1v1h-1zM398.98 536.71h1v1h-1zM398.98 546.17h1v1h-1zM408.44 158.43h1v1h-1zM408.44 167.89h1v1h-1zM408.44 177.34h1v1h-1zM408.44 186.8h1v1h-1zM408.44 196.26h1v1h-1zM408.44 205.71h1v1h-1zM408.44 215.17h1v1h-1zM408.44 224.63h1v1h-1zM408.44 234.09h1v1h-1zM408.44 243.54h1v1h-1zM408.44 253h1v1h-1zM408.44 262.46h1v1h-1zM408.44 271.91h1v1h-1zM408.44 281.37h1v1h-1zM408.44 290.83h1v1h-1zM408.44 300.28h1v1h-1zM408.44 309.74h1v1h-1zM408.44 319.2h1v1h-1zM408.44 328.66h1v1h-1zM408.44 338.11h1v1h-1zM408.44 347.57h1v1h-1zM408.44 357.03h1v1h-1zM408.44 366.48h1v1h-1zM408.44 375.94h1v1h-1zM408.44 385.4h1v1h-1zM408.44 394.85h1v1h-1zM408.44 404.31h1v1h-1zM408.44 413.77h1v1h-1zM408.44 423.23h1v1h-1zM408.44 432.68h1v1h-1zM408.44 442.14h1v1h-1zM408.44 451.6h1v1h-1zM408.44 461.05h1v1h-1zM408.44 470.51h1v1h-1zM408.44 479.97h1v1h-1zM408.44 489.42h1v1h-1zM408.44 498.88h1v1h-1zM408.44 508.34h1v1h-1zM408.44 517.8h1v1h-1zM408.44 527.25h1v1h-1zM408.44 536.71h1v1h-1zM408.44 546.17h1v1h-1zM417.89 158.43h1v1h-1zM417.89 167.89h1v1h-1zM417.89 177.34h1v1h-1zM417.89 186.8h1v1h-1zM417.89 196.26h1v1h-1zM417.89 205.71h1v1h-1zM417.89 215.17h1v1h-1zM417.89 224.63h1v1h-1zM417.89 234.09h1v1h-1zM417.89 243.54h1v1h-1zM417.89 253h1v1h-1zM417.89 262.46h1v1h-1zM417.89 271.91h1v1h-1zM417.89 281.37h1v1h-1zM417.89 290.83h1v1h-1zM417.89 300.28h1v1h-1zM417.89 309.74h1v1h-1zM417.89 319.2h1v1h-1zM417.89 328.66h1v1h-1zM417.89 338.11h1v1h-1zM417.89 347.57h1v1h-1zM417.89 357.03h1v1h-1zM417.89 366.48h1v1h-1zM417.89 375.94h1v1h-1zM417.89 385.4h1v1h-1zM417.89 394.85h1v1h-1zM417.89 404.31h1v1h-1zM417.89 413.77h1v1h-1zM417.89 423.23h1v1h-1zM417.89 432.68h1v1h-1zM417.89 442.14h1v1h-1zM417.89 451.6h1v1h-1zM417.89 461.05h1v1h-1zM417.89 470.51h1v1h-1zM417.89 479.97h1v1h-1zM417.89 489.42h1v1h-1zM417.89 498.88h1v1h-1zM417.89 508.34h1v1h-1zM417.89 517.8h1v1h-1zM417.89 527.25h1v1h-1zM417.89 536.71h1v1h-1zM417.89 546.17h1v1h-1zM427.35 158.43h1v1h-1zM427.35 167.89h1v1h-1zM427.35 177.34h1v1h-1zM427.35 186.8h1v1h-1zM427.35 196.26h1v1h-1zM427.35 205.71h1v1h-1zM427.35 215.17h1v1h-1zM427.35 224.63h1v1h-1zM427.35 234.09h1v1h-1zM427.35 243.54h1v1h-1zM427.35 253h1v1h-1zM427.35 262.46h1v1h-1zM427.35 271.91h1v1h-1zM427.35 281.37h1v1h-1zM427.35 290.83h1v1h-1zM427.35 300.28h1v1h-1zM427.35 309.74h1v1h-1zM427.35 319.2h1v1h-1zM427.35 328.66h1v1h-1zM427.35 338.11h1v1h-1zM427.35 347.57h1v1h-1zM427.35 357.03h1v1h-1zM427.35 366.48h1v1h-1zM427.35 375.94h1v1h-1zM427.35 385.4h1v1h-1zM427.35 394.85h1v1h-1zM427.35 404.31h1v1h-1zM427.35 413.77h1v1h-1zM427.35 423.23h1v1h-1zM427.35 432.68h1v1h-1zM427.35 442.14h1v1h-1zM427.35 451.6h1v1h-1zM427.35 461.05h1v1h-1zM427.35 470.51h1v1h-1zM427.35 479.97h1v1h-1zM427.35 489.42h1v1h-1zM427.35 498.88h1v1h-1zM427.35 508.34h1v1h-1zM427.35 517.8h1v1h-1zM427.35 527.25h1v1h-1zM427.35 536.71h1v1h-1zM427.35 546.17h1v1h-1zM436.81 158.43h1v1h-1zM436.81 167.89h1v1h-1zM436.81 177.34h1v1h-1zM436.81 186.8h1v1h-1zM436.81 196.26h1v1h-1zM436.81 205.71h1v1h-1zM436.81 215.17h1v1h-1zM436.81 224.63h1v1h-1zM436.81 234.09h1v1h-1zM436.81 243.54h1v1h-1zM436.81 253h1v1h-1zM436.81 262.46h1v1h-1zM436.81 271.91h1v1h-1zM436.81 281.37h1v1h-1zM436.81 290.83h1v1h-1zM436.81 300.28h1v1h-1zM436.81 309.74h1v1h-1zM436.81 319.2h1v1h-1zM436.81 328.66h1v1h-1zM436.81 338.11h1v1h-1zM436.81 347.57h1v1h-1zM436.81 357.03h1v1h-1zM436.81 366.48h1v1h-1zM436.81 375.94h1v1h-1zM436.81 385.4h1v1h-1zM436.81 394.85h1v1h-1zM436.81 404.31h1v1h-1zM436.81 413.77h1v1h-1zM436.81 423.23h1v1h-1zM436.81 432.68h1v1h-1zM436.81 442.14h1v1h-1zM436.81 451.6h1v1h-1zM436.81 461.05h1v1h-1zM436.81 470.51h1v1h-1zM436.81 479.97h1v1h-1zM436.81 489.42h1v1h-1zM436.81 498.88h1v1h-1zM436.81 508.34h1v1h-1zM436.81 517.8h1v1h-1zM436.81 527.25h1v1h-1zM436.81 536.71h1v1h-1zM436.81 546.17h1v1h-1zM446.27 158.43h1v1h-1zM446.27 167.89h1v1h-1zM446.27 177.34h1v1h-1zM446.27 186.8h1v1h-1zM446.27 196.26h1v1h-1zM446.27 205.71h1v1h-1zM446.27 215.17h1v1h-1zM446.27 224.63h1v1h-1zM446.27 234.09h1v1h-1zM446.27 243.54h1v1h-1zM446.27 253h1v1h-1zM446.27 262.46h1v1h-1zM446.27 271.91h1v1h-1zM446.27 281.37h1v1h-1zM446.27 290.83h1v1h-1zM446.27 300.28h1v1h-1zM446.27 309.74h1v1h-1zM446.27 319.2h1v1h-1zM446.27 328.66h1v1h-1zM446.27 338.11h1v1h-1zM446.27 347.57h1v1h-1zM446.27 357.03h1v1h-1zM446.27 366.48h1v1h-1zM446.27 375.94h1v1h-1zM446.27 385.4h1v1h-1zM446.27 394.85h1v1h-1zM446.27 404.31h1v1h-1zM446.27 413.77h1v1h-1zM446.27 423.23h1v1h-1zM446.27 432.68h1v1h-1zM446.27 442.14h1v1h-1zM446.27 451.6h1v1h-1zM446.27 461.05h1v1h-1zM446.27 470.51h1v1h-1zM446.27 479.97h1v1h-1zM446.27 489.42h1v1h-1zM446.27 498.88h1v1h-1zM446.27 508.34h1v1h-1zM446.27 517.8h1v1h-1zM446.27 527.25h1v1h-1zM446.27 536.71h1v1h-1zM446.27 546.17h1v1h-1zM455.72 158.43h1v1h-1zM455.72 167.89h1v1h-1zM455.72 177.34h1v1h-1zM455.72 186.8h1v1h-1zM455.72 196.26h1v1h-1zM455.72 205.71h1v1h-1zM455.72 215.17h1v1h-1zM455.72 224.63h1v1h-1zM455.72 234.09h1v1h-1zM455.72 243.54h1v1h-1zM455.72 253h1v1h-1zM455.72 262.46h1v1h-1zM455.72 271.91h1v1h-1zM455.72 281.37h1v1h-1zM455.72 290.83h1v1h-1zM455.72 300.28h1v1h-1zM455.72 309.74h1v1h-1zM455.72 319.2h1v1h-1zM455.72 328.66h1v1h-1zM455.72 338.11h1v1h-1zM455.72 347.57h1v1h-1zM455.72 357.03h1v1h-1zM455.72 366.48h1v1h-1zM455.72 375.94h1v1h-1zM455.72 385.4h1v1h-1zM455.72 394.85h1v1h-1zM455.72 404.31h1v1h-1zM455.72 413.77h1v1h-1zM455.72 423.23h1v1h-1zM455.72 432.68h1v1h-1zM455.72 442.14h1v1h-1zM455.72 451.6h1v1h-1zM455.72 461.05h1v1h-1zM455.72 470.51h1v1h-1zM455.72 479.97h1v1h-1zM455.72 489.42h1v1h-1zM455.72 498.88h1v1h-1zM455.72 508.34h1v1h-1zM455.72 517.8h1v1h-1zM455.72 527.25h1v1h-1zM455.72 536.71h1v1h-1zM455.72 546.17h1v1h-1zM465.18 158.43h1v1h-1zM465.18 167.89h1v1h-1zM465.18 177.34h1v1h-1zM465.18 186.8h1v1h-1zM465.18 196.26h1v1h-1zM465.18 205.71h1v1h-1zM465.18 215.17h1v1h-1zM465.18 224.63h1v1h-1zM465.18 234.09h1v1h-1zM465.18 243.54h1v1h-1zM465.18 253h1v1h-1zM465.18 262.46h1v1h-1zM465.18 271.91h1v1h-1zM465.18 281.37h1v1h-1zM465.18 290.83h1v1h-1zM465.18 300.28h1v1h-1zM465.18 309.74h1v1h-1zM465.18 319.2h1v1h-1zM465.18 328.66h1v1h-1zM465.18 338.11h1v1h-1zM465.18 347.57h1v1h-1zM465.18 357.03h1v1h-1zM465.18 366.48h1v1h-1zM465.18 375.94h1v1h-1zM465.18 385.4h1v1h-1zM465.18 394.85h1v1h-1zM465.18 404.31h1v1h-1zM465.18 413.77h1v1h-1zM465.18 423.23h1v1h-1zM465.18 432.68h1v1h-1zM465.18 442.14h1v1h-1zM465.18 451.6h1v1h-1zM465.18 461.05h1v1h-1zM465.18 470.51h1v1h-1zM465.18 479.97h1v1h-1zM465.18 489.42h1v1h-1zM465.18 498.88h1v1h-1zM465.18 508.34h1v1h-1zM465.18 517.8h1v1h-1zM465.18 527.25h1v1h-1zM465.18 536.71h1v1h-1zM465.18 546.17h1v1h-1zM474.64 158.43h1v1h-1zM474.64 167.89h1v1h-1zM474.64 177.34h1v1h-1zM474.64 186.8h1v1h-1zM474.64 196.26h1v1h-1zM474.64 205.71h1v1h-1zM474.64 215.17h1v1h-1zM474.64 224.63h1v1h-1zM474.64 234.09h1v1h-1zM474.64 243.54h1v1h-1zM474.64 253h1v1h-1zM474.64 262.46h1v1h-1zM474.64 271.91h1v1h-1zM474.64 281.37h1v1h-1zM474.64 290.83h1v1h-1zM474.64 300.28h1v1h-1zM474.64 309.74h1v1h-1zM474.64 319.2h1v1h-1zM474.64 328.66h1v1h-1zM474.64 338.11h1v1h-1zM474.64 347.57h1v1h-1zM474.64 357.03h1v1h-1zM474.64 366.48h1v1h-1zM474.64 375.94h1v1h-1zM474.64 385.4h1v1h-1zM474.64 394.85h1v1h-1zM474.64 404.31h1v1h-1zM474.64 413.77h1v1h-1zM474.64 423.23h1v1h-1zM474.64 432.68h1v1h-1zM474.64 442.14h1v1h-1zM474.64 451.6h1v1h-1zM474.64 461.05h1v1h-1zM474.64 470.51h1v1h-1zM474.64 479.97h1v1h-1zM474.64 489.42h1v1h-1zM474.64 498.88h1v1h-1zM474.64 508.34h1v1h-1zM474.64 517.8h1v1h-1zM474.64 527.25h1v1h-1zM474.64 536.71h1v1h-1zM474.64 546.17h1v1h-1zM484.09 158.43h1v1h-1zM484.09 167.89h1v1h-1zM484.09 177.34h1v1h-1zM484.09 186.8h1v1h-1zM484.09 196.26h1v1h-1zM484.09 205.71h1v1h-1zM484.09 215.17h1v1h-1zM484.09 224.63h1v1h-1zM484.09 234.09h1v1h-1zM484.09 243.54h1v1h-1zM484.09 253h1v1h-1zM484.09 262.46h1v1h-1zM484.09 271.91h1v1h-1zM484.09 281.37h1v1h-1zM484.09 290.83h1v1h-1zM484.09 300.28h1v1h-1zM484.09 309.74h1v1h-1zM484.09 319.2h1v1h-1zM484.09 328.66h1v1h-1zM484.09 338.11h1v1h-1zM484.09 347.57h1v1h-1zM484.09 357.03h1v1h-1zM484.09 366.48h1v1h-1zM484.09 375.94h1v1h-1zM484.09 385.4h1v1h-1zM484.09 394.85h1v1h-1zM484.09 404.31h1v1h-1zM484.09 413.77h1v1h-1zM484.09 423.23h1v1h-1zM484.09 432.68h1v1h-1zM484.09 442.14h1v1h-1zM484.09 451.6h1v1h-1zM484.09 461.05h1v1h-1zM484.09 470.51h1v1h-1zM484.09 479.97h1v1h-1zM484.09 489.42h1v1h-1zM484.09 498.88h1v1h-1zM484.09 508.34h1v1h-1zM484.09 517.8h1v1h-1zM484.09 527.25h1v1h-1zM484.09 536.71h1v1h-1zM484.09 546.17h1v1h-1zM493.55 158.43h1v1h-1zM493.55 167.89h1v1h-1zM493.55 177.34h1v1h-1zM493.55 186.8h1v1h-1zM493.55 196.26h1v1h-1zM493.55 205.71h1v1h-1zM493.55 215.17h1v1h-1zM493.55 224.63h1v1h-1zM493.55 234.09h1v1h-1zM493.55 243.54h1v1h-1zM493.55 253h1v1h-1zM493.55 262.46h1v1h-1zM493.55 271.91h1v1h-1zM493.55 281.37h1v1h-1zM493.55 290.83h1v1h-1zM493.55 300.28h1v1h-1zM493.55 309.74h1v1h-1zM493.55 319.2h1v1h-1zM493.55 328.66h1v1h-1zM493.55 338.11h1v1h-1zM493.55 347.57h1v1h-1zM493.55 357.03h1v1h-1zM493.55 366.48h1v1h-1zM493.55 375.94h1v1h-1zM493.55 385.4h1v1h-1zM493.55 394.85h1v1h-1zM493.55 404.31h1v1h-1zM493.55 413.77h1v1h-1zM493.55 423.23h1v1h-1zM493.55 432.68h1v1h-1zM493.55 442.14h1v1h-1zM493.55 451.6h1v1h-1zM493.55 461.05h1v1h-1zM493.55 470.51h1v1h-1zM493.55 479.97h1v1h-1zM493.55 489.42h1v1h-1zM493.55 498.88h1v1h-1zM493.55 508.34h1v1h-1zM493.55 517.8h1v1h-1zM493.55 527.25h1v1h-1zM493.55 536.71h1v1h-1zM493.55 546.17h1v1h-1zM503.01 158.43h1v1h-1zM503.01 167.89h1v1h-1zM503.01 177.34h1v1h-1zM503.01 186.8h1v1h-1zM503.01 196.26h1v1h-1zM503.01 205.71h1v1h-1zM503.01 215.17h1v1h-1zM503.01 224.63h1v1h-1zM503.01 234.09h1v1h-1zM503.01 243.54h1v1h-1zM503.01 253h1v1h-1zM503.01 262.46h1v1h-1zM503.01 271.91h1v1h-1zM503.01 281.37h1v1h-1zM503.01 290.83h1v1h-1zM503.01 300.28h1v1h-1zM503.01 309.74h1v1h-1zM503.01 319.2h1v1h-1zM503.01 328.66h1v1h-1zM503.01 338.11h1v1h-1zM503.01 347.57h1v1h-1zM503.01 357.03h1v1h-1zM503.01 366.48h1v1h-1zM503.01 375.94h1v1h-1zM503.01 385.4h1v1h-1zM503.01 394.85h1v1h-1zM503.01 404.31h1v1h-1zM503.01 413.77h1v1h-1zM503.01 423.23h1v1h-1zM503.01 432.68h1v1h-1zM503.01 442.14h1v1h-1zM503.01 451.6h1v1h-1zM503.01 461.05h1v1h-1zM503.01 470.51h1v1h-1zM503.01 479.97h1v1h-1zM503.01 489.42h1v1h-1zM503.01 498.88h1v1h-1zM503.01 508.34h1v1h-1zM503.01 517.8h1v1h-1zM503.01 527.25h1v1h-1zM503.01 536.71h1v1h-1zM503.01 546.17h1v1h-1zM512.47 158.43h1v1h-1zM512.47 167.89h1v1h-1zM512.47 177.34h1v1h-1zM512.47 186.8h1v1h-1zM512.47 196.26h1v1h-1zM512.47 205.71h1v1h-1zM512.47 215.17h1v1h-1zM512.47 224.63h1v1h-1zM512.47 234.09h1v1h-1zM512.47 243.54h1v1h-1zM512.47 253h1v1h-1zM512.47 262.46h1v1h-1zM512.47 271.91h1v1h-1zM512.47 281.37h1v1h-1zM512.47 290.83h1v1h-1zM512.47 300.28h1v1h-1zM512.47 309.74h1v1h-1zM512.47 319.2h1v1h-1zM512.47 328.66h1v1h-1zM512.47 338.11h1v1h-1zM512.47 347.57h1v1h-1zM512.47 357.03h1v1h-1zM512.47 366.48h1v1h-1zM512.47 375.94h1v1h-1zM512.47 385.4h1v1h-1zM512.47 394.85h1v1h-1zM512.47 404.31h1v1h-1zM512.47 413.77h1v1h-1zM512.47 423.23h1v1h-1zM512.47 432.68h1v1h-1zM512.47 442.14h1v1h-1zM512.47 451.6h1v1h-1zM512.47 461.05h1v1h-1zM512.47 470.51h1v1h-1zM512.47 479.97h1v1h-1zM512.47 489.42h1v1h-1zM512.47 498.88h1v1h-1zM512.47 508.34h1v1h-1zM512.47 517.8h1v1h-1zM512.47 527.25h1v1h-1zM512.47 536.71h1v1h-1zM512.47 546.17h1v1h-1zM521.92 158.43h1v1h-1zM521.92 167.89h1v1h-1zM521.92 177.34h1v1h-1zM521.92 186.8h1v1h-1zM521.92 196.26h1v1h-1zM521.92 205.71h1v1h-1zM521.92 215.17h1v1h-1zM521.92 224.63h1v1h-1zM521.92 234.09h1v1h-1zM521.92 243.54h1v1h-1zM521.92 253h1v1h-1zM521.92 262.46h1v1h-1zM521.92 271.91h1v1h-1zM521.92 281.37h1v1h-1zM521.92 290.83h1v1h-1zM521.92 300.28h1v1h-1zM521.92 309.74h1v1h-1zM521.92 319.2h1v1h-1zM521.92 328.66h1v1h-1zM521.92 338.11h1v1h-1zM521.92 347.57h1v1h-1zM521.92 357.03h1v1h-1zM521.92 366.48h1v1h-1zM521.92 375.94h1v1h-1zM521.92 385.4h1v1h-1zM521.92 394.85h1v1h-1zM521.92 404.31h1v1h-1zM521.92 413.77h1v1h-1zM521.92 423.23h1v1h-1zM521.92 432.68h1v1h-1zM521.92 442.14h1v1h-1zM521.92 451.6h1v1h-1zM521.92 461.05h1v1h-1zM521.92 470.51h1v1h-1zM521.92 479.97h1v1h-1zM521.92 489.42h1v1h-1zM521.92 498.88h1v1h-1zM521.92 508.34h1v1h-1zM521.92 517.8h1v1h-1zM521.92 527.25h1v1h-1zM521.92 536.71h1v1h-1zM521.92 546.17h1v1h-1zM531.38 158.43h1v1h-1zM531.38 167.89h1v1h-1zM531.38 177.34h1v1h-1zM531.38 186.8h1v1h-1zM531.38 196.26h1v1h-1zM531.38 205.71h1v1h-1zM531.38 215.17h1v1h-1zM531.38 224.63h1v1h-1zM531.38 234.09h1v1h-1zM531.38 243.54h1v1h-1zM531.38 253h1v1h-1zM531.38 262.46h1v1h-1zM531.38 271.91h1v1h-1zM531.38 281.37h1v1h-1zM531.38 290.83h1v1h-1zM531.38 300.28h1v1h-1zM531.38 309.74h1v1h-1zM531.38 319.2h1v1h-1zM531.38 328.66h1v1h-1zM531.38 338.11h1v1h-1zM531.38 347.57h1v1h-1zM531.38 357.03h1v1h-1zM531.38 366.48h1v1h-1zM531.38 375.94h1v1h-1zM531.38 385.4h1v1h-1zM531.38 394.85h1v1h-1zM531.38 404.31h1v1h-1zM531.38 413.77h1v1h-1zM531.38 423.23h1v1h-1zM531.38 432.68h1v1h-1zM531.38 442.14h1v1h-1zM531.38 451.6h1v1h-1zM531.38 461.05h1v1h-1zM531.38 470.51h1v1h-1zM531.38 479.97h1v1h-1zM531.38 489.42h1v1h-1zM531.38 498.88h1v1h-1zM531.38 508.34h1v1h-1zM531.38 517.8h1v1h-1zM531.38 527.25h1v1h-1zM531.38 536.71h1v1h-1zM531.38 546.17h1v1h-1zM540.84 158.43h1v1h-1zM540.84 167.89h1v1h-1zM540.84 177.34h1v1h-1zM540.84 186.8h1v1h-1zM540.84 196.26h1v1h-1zM540.84 205.71h1v1h-1zM540.84 215.17h1v1h-1zM540.84 224.63h1v1h-1zM540.84 234.09h1v1h-1zM540.84 243.54h1v1h-1zM540.84 253h1v1h-1zM540.84 262.46h1v1h-1zM540.84 271.91h1v1h-1zM540.84 281.37h1v1h-1zM540.84 290.83h1v1h-1zM540.84 300.28h1v1h-1zM540.84 309.74h1v1h-1zM540.84 319.2h1v1h-1zM540.84 328.66h1v1h-1zM540.84 338.11h1v1h-1zM540.84 347.57h1v1h-1zM540.84 357.03h1v1h-1zM540.84 366.48h1v1h-1zM540.84 375.94h1v1h-1zM540.84 385.4h1v1h-1zM540.84 394.85h1v1h-1zM540.84 404.31h1v1h-1zM540.84 413.77h1v1h-1zM540.84 423.23h1v1h-1zM540.84 432.68h1v1h-1zM540.84 442.14h1v1h-1zM540.84 451.6h1v1h-1zM540.84 461.05h1v1h-1zM540.84 470.51h1v1h-1zM540.84 479.97h1v1h-1zM540.84 489.42h1v1h-1zM540.84 498.88h1v1h-1zM540.84 508.34h1v1h-1zM540.84 517.8h1v1h-1zM540.84 527.25h1v1h-1zM540.84 536.71h1v1h-1zM540.84 546.17h1v1h-1zM550.29 158.43h1v1h-1zM550.29 167.89h1v1h-1zM550.29 177.34h1v1h-1zM550.29 186.8h1v1h-1zM550.29 196.26h1v1h-1zM550.29 205.71h1v1h-1zM550.29 215.17h1v1h-1zM550.29 224.63h1v1h-1zM550.29 234.09h1v1h-1zM550.29 243.54h1v1h-1zM550.29 253h1v1h-1zM550.29 262.46h1v1h-1zM550.29 271.91h1v1h-1zM550.29 281.37h1v1h-1zM550.29 290.83h1v1h-1zM550.29 300.28h1v1h-1zM550.29 309.74h1v1h-1zM550.29 319.2h1v1h-1zM550.29 328.66h1v1h-1zM550.29 338.11h1v1h-1zM550.29 347.57h1v1h-1zM550.29 357.03h1v1h-1zM550.29 366.48h1v1h-1zM550.29 375.94h1v1h-1zM550.29 385.4h1v1h-1zM550.29 394.85h1v1h-1zM550.29 404.31h1v1h-1zM550.29 413.77h1v1h-1zM550.29 423.23h1v1h-1zM550.29 432.68h1v1h-1zM550.29 442.14h1v1h-1zM550.29 451.6h1v1h-1zM550.29 461.05h1v1h-1zM550.29 470.51h1v1h-1zM550.29 479.97h1v1h-1zM550.29 489.42h1v1h-1zM550.29 498.88h1v1h-1zM550.29 508.34h1v1h-1zM550.29 517.8h1v1h-1zM550.29 527.25h1v1h-1zM550.29 536.71h1v1h-1zM550.29 546.17h1v1h-1zM559.75 158.43h1v1h-1zM559.75 167.89h1v1h-1zM559.75 177.34h1v1h-1zM559.75 186.8h1v1h-1zM559.75 196.26h1v1h-1zM559.75 205.71h1v1h-1zM559.75 215.17h1v1h-1zM559.75 224.63h1v1h-1zM559.75 234.09h1v1h-1zM559.75 243.54h1v1h-1zM559.75 253h1v1h-1zM559.75 262.46h1v1h-1zM559.75 271.91h1v1h-1zM559.75 281.37h1v1h-1zM559.75 290.83h1v1h-1zM559.75 300.28h1v1h-1zM559.75 309.74h1v1h-1zM559.75 319.2h1v1h-1zM559.75 328.66h1v1h-1zM559.75 338.11h1v1h-1zM559.75 347.57h1v1h-1zM559.75 357.03h1v1h-1zM559.75 366.48h1v1h-1zM559.75 375.94h1v1h-1zM559.75 385.4h1v1h-1zM559.75 394.85h1v1h-1zM559.75 404.31h1v1h-1zM559.75 413.77h1v1h-1zM559.75 423.23h1v1h-1zM559.75 432.68h1v1h-1zM559.75 442.14h1v1h-1zM559.75 451.6h1v1h-1zM559.75 461.05h1v1h-1zM559.75 470.51h1v1h-1zM559.75 479.97h1v1h-1zM559.75 489.42h1v1h-1zM559.75 498.88h1v1h-1zM559.75 508.34h1v1h-1zM559.75 517.8h1v1h-1zM559.75 527.25h1v1h-1zM559.75 536.71h1v1h-1zM559.75 546.17h1v1h-1zM569.21 158.43h1v1h-1zM569.21 167.89h1v1h-1zM569.21 177.34h1v1h-1zM569.21 186.8h1v1h-1zM569.21 196.26h1v1h-1zM569.21 205.71h1v1h-1zM569.21 215.17h1v1h-1zM569.21 224.63h1v1h-1zM569.21 234.09h1v1h-1zM569.21 243.54h1v1h-1zM569.21 253h1v1h-1zM569.21 262.46h1v1h-1zM569.21 271.91h1v1h-1zM569.21 281.37h1v1h-1zM569.21 290.83h1v1h-1zM569.21 300.28h1v1h-1zM569.21 309.74h1v1h-1zM569.21 319.2h1v1h-1zM569.21 328.66h1v1h-1zM569.21 338.11h1v1h-1zM569.21 347.57h1v1h-1zM569.21 357.03h1v1h-1zM569.21 366.48h1v1h-1zM569.21 375.94h1v1h-1zM569.21 385.4h1v1h-1zM569.21 394.85h1v1h-1zM569.21 404.31h1v1h-1zM569.21 413.77h1v1h-1zM569.21 423.23h1v1h-1zM569.21 432.68h1v1h-1zM569.21 442.14h1v1h-1zM569.21 451.6h1v1h-1zM569.21 461.05h1v1h-1zM569.21 470.51h1v1h-1zM569.21 479.97h1v1h-1zM569.21 489.42h1v1h-1zM569.21 498.88h1v1h-1zM569.21 508.34h1v1h-1zM569.21 517.8h1v1h-1zM569.21 527.25h1v1h-1zM569.21 536.71h1v1h-1zM569.21 546.17h1v1h-1zM578.66 158.43h1v1h-1zM578.66 167.89h1v1h-1zM578.66 177.34h1v1h-1zM578.66 186.8h1v1h-1zM578.66 196.26h1v1h-1zM578.66 205.71h1v1h-1zM578.66 215.17h1v1h-1zM578.66 224.63h1v1h-1zM578.66 234.09h1v1h-1zM578.66 243.54h1v1h-1zM578.66 253h1v1h-1zM578.66 262.46h1v1h-1zM578.66 271.91h1v1h-1zM578.66 281.37h1v1h-1zM578.66 290.83h1v1h-1zM578.66 300.28h1v1h-1zM578.66 309.74h1v1h-1zM578.66 319.2h1v1h-1zM578.66 328.66h1v1h-1zM578.66 338.11h1v1h-1zM578.66 347.57h1v1h-1zM578.66 357.03h1v1h-1zM578.66 366.48h1v1h-1zM578.66 375.94h1v1h-1zM578.66 385.4h1v1h-1zM578.66 394.85h1v1h-1zM578.66 404.31h1v1h-1zM578.66 413.77h1v1h-1zM578.66 423.23h1v1h-1zM578.66 432.68h1v1h-1zM578.66 442.14h1v1h-1zM578.66 451.6h1v1h-1zM578.66 461.05h1v1h-1zM578.66 470.51h1v1h-1zM578.66 479.97h1v1h-1zM578.66 489.42h1v1h-1zM578.66 498.88h1v1h-1zM578.66 508.34h1v1h-1zM578.66 517.8h1v1h-1zM578.66 527.25h1v1h-1zM578.66 536.71h1v1h-1zM578.66 546.17h1v1h-1zM588.12 158.43h1v1h-1zM588.12 167.89h1v1h-1zM588.12 177.34h1v1h-1zM588.12 186.8h1v1h-1zM588.12 196.26h1v1h-1zM588.12 205.71h1v1h-1zM588.12 215.17h1v1h-1zM588.12 224.63h1v1h-1zM588.12 234.09h1v1h-1zM588.12 243.54h1v1h-1zM588.12 253h1v1h-1zM588.12 262.46h1v1h-1zM588.12 271.91h1v1h-1zM588.12 281.37h1v1h-1zM588.12 290.83h1v1h-1zM588.12 300.28h1v1h-1zM588.12 309.74h1v1h-1zM588.12 319.2h1v1h-1zM588.12 328.66h1v1h-1zM588.12 338.11h1v1h-1zM588.12 347.57h1v1h-1zM588.12 357.03h1v1h-1zM588.12 366.48h1v1h-1zM588.12 375.94h1v1h-1zM588.12 385.4h1v1h-1zM588.12 394.85h1v1h-1zM588.12 404.31h1v1h-1zM588.12 413.77h1v1h-1zM588.12 423.23h1v1h-1zM588.12 432.68h1v1h-1zM588.12 442.14h1v1h-1zM588.12 451.6h1v1h-1zM588.12 461.05h1v1h-1zM588.12 470.51h1v1h-1zM588.12 479.97h1v1h-1zM588.12 489.42h1v1h-1zM588.12 498.88h1v1h-1zM588.12 508.34h1v1h-1zM588.12 517.8h1v1h-1zM588.12 527.25h1v1h-1zM588.12 536.71h1v1h-1zM588.12 546.17h1v1h-1zM597.58 158.43h1v1h-1zM597.58 167.89h1v1h-1zM597.58 177.34h1v1h-1zM597.58 186.8h1v1h-1zM597.58 196.26h1v1h-1zM597.58 205.71h1v1h-1zM597.58 215.17h1v1h-1zM597.58 224.63h1v1h-1zM597.58 234.09h1v1h-1zM597.58 243.54h1v1h-1zM597.58 253h1v1h-1zM597.58 262.46h1v1h-1zM597.58 271.91h1v1h-1zM597.58 281.37h1v1h-1zM597.58 290.83h1v1h-1zM597.58 300.28h1v1h-1zM597.58 309.74h1v1h-1zM597.58 319.2h1v1h-1zM597.58 328.66h1v1h-1zM597.58 338.11h1v1h-1zM597.58 347.57h1v1h-1zM597.58 357.03h1v1h-1zM597.58 366.48h1v1h-1zM597.58 375.94h1v1h-1zM597.58 385.4h1v1h-1zM597.58 394.85h1v1h-1zM597.58 404.31h1v1h-1zM597.58 413.77h1v1h-1zM597.58 423.23h1v1h-1zM597.58 432.68h1v1h-1zM597.58 442.14h1v1h-1zM597.58 451.6h1v1h-1zM597.58 461.05h1v1h-1zM597.58 470.51h1v1h-1zM597.58 479.97h1v1h-1zM597.58 489.42h1v1h-1zM597.58 498.88h1v1h-1zM597.58 508.34h1v1h-1zM597.58 517.8h1v1h-1zM597.58 527.25h1v1h-1zM597.58 536.71h1v1h-1zM597.58 546.17h1v1h-1zM607.03 158.43h1v1h-1zM607.03 167.89h1v1h-1zM607.03 177.34h1v1h-1zM607.03 186.8h1v1h-1zM607.03 196.26h1v1h-1zM607.03 205.71h1v1h-1zM607.03 215.17h1v1h-1zM607.03 224.63h1v1h-1zM607.03 234.09h1v1h-1zM607.03 243.54h1v1h-1zM607.03 253h1v1h-1zM607.03 262.46h1v1h-1zM607.03 271.91h1v1h-1zM607.03 281.37h1v1h-1zM607.03 290.83h1v1h-1zM607.03 300.28h1v1h-1zM607.03 309.74h1v1h-1zM607.03 319.2h1v1h-1zM607.03 328.66h1v1h-1zM607.03 338.11h1v1h-1zM607.03 347.57h1v1h-1zM607.03 357.03h1v1h-1zM607.03 366.48h1v1h-1zM607.03 375.94h1v1h-1zM607.03 385.4h1v1h-1zM607.03 394.85h1v1h-1zM607.03 404.31h1v1h-1zM607.03 413.77h1v1h-1zM607.03 423.23h1v1h-1zM607.03 432.68h1v1h-1zM607.03 442.14h1v1h-1zM607.03 451.6h1v1h-1zM607.03 461.05h1v1h-1zM607.03 470.51h1v1h-1zM607.03 479.97h1v1h-1zM607.03 489.42h1v1h-1zM607.03 498.88h1v1h-1zM607.03 508.34h1v1h-1zM607.03 517.8h1v1h-1zM607.03 527.25h1v1h-1zM607.03 536.71h1v1h-1zM607.03 546.17h1v1h-1zM616.49 158.43h1v1h-1zM616.49 167.89h1v1h-1zM616.49 177.34h1v1h-1zM616.49 186.8h1v1h-1zM616.49 196.26h1v1h-1zM616.49 205.71h1v1h-1zM616.49 215.17h1v1h-1zM616.49 224.63h1v1h-1zM616.49 234.09h1v1h-1zM616.49 243.54h1v1h-1zM616.49 253h1v1h-1zM616.49 262.46h1v1h-1zM616.49 271.91h1v1h-1zM616.49 281.37h1v1h-1zM616.49 290.83h1v1h-1zM616.49 300.28h1v1h-1zM616.49 309.74h1v1h-1zM616.49 319.2h1v1h-1zM616.49 328.66h1v1h-1zM616.49 338.11h1v1h-1zM616.49 347.57h1v1h-1zM616.49 357.03h1v1h-1zM616.49 366.48h1v1h-1zM616.49 375.94h1v1h-1zM616.49 385.4h1v1h-1zM616.49 394.85h1v1h-1zM616.49 404.31h1v1h-1zM616.49 413.77h1v1h-1zM616.49 423.23h1v1h-1zM616.49 432.68h1v1h-1zM616.49 442.14h1v1h-1zM616.49 451.6h1v1h-1zM616.49 461.05h1v1h-1zM616.49 470.51h1v1h-1zM616.49 479.97h1v1h-1zM616.49 489.42h1v1h-1zM616.49 498.88h1v1h-1zM616.49 508.34h1v1h-1zM616.49 517.8h1v1h-1zM616.49 527.25h1v1h-1zM616.49 536.71h1v1h-1zM616.49 546.17h1v1h-1zM625.95 158.43h1v1h-1zM625.95 167.89h1v1h-1zM625.95 177.34h1v1h-1zM625.95 186.8h1v1h-1zM625.95 196.26h1v1h-1zM625.95 205.71h1v1h-1zM625.95 215.17h1v1h-1zM625.95 224.63h1v1h-1zM625.95 234.09h1v1h-1zM625.95 243.54h1v1h-1zM625.95 253h1v1h-1zM625.95 262.46h1v1h-1zM625.95 271.91h1v1h-1zM625.95 281.37h1v1h-1zM625.95 290.83h1v1h-1zM625.95 300.28h1v1h-1zM625.95 309.74h1v1h-1zM625.95 319.2h1v1h-1zM625.95 328.66h1v1h-1zM625.95 338.11h1v1h-1zM625.95 347.57h1v1h-1zM625.95 357.03h1v1h-1zM625.95 366.48h1v1h-1zM625.95 375.94h1v1h-1zM625.95 385.4h1v1h-1zM625.95 394.85h1v1h-1zM625.95 404.31h1v1h-1zM625.95 413.77h1v1h-1zM625.95 423.23h1v1h-1zM625.95 432.68h1v1h-1zM625.95 442.14h1v1h-1zM625.95 451.6h1v1h-1zM625.95 461.05h1v1h-1zM625.95 470.51h1v1h-1zM625.95 479.97h1v1h-1zM625.95 489.42h1v1h-1zM625.95 498.88h1v1h-1zM625.95 508.34h1v1h-1zM625.95 517.8h1v1h-1zM625.95 527.25h1v1h-1zM625.95 536.71h1v1h-1zM625.95 546.17h1v1h-1zM635.41 158.43h1v1h-1zM635.41 167.89h1v1h-1zM635.41 177.34h1v1h-1zM635.41 186.8h1v1h-1zM635.41 196.26h1v1h-1zM635.41 205.71h1v1h-1zM635.41 215.17h1v1h-1zM635.41 224.63h1v1h-1zM635.41 234.09h1v1h-1zM635.41 243.54h1v1h-1zM635.41 253h1v1h-1zM635.41 262.46h1v1h-1zM635.41 271.91h1v1h-1zM635.41 281.37h1v1h-1zM635.41 290.83h1v1h-1zM635.41 300.28h1v1h-1zM635.41 309.74h1v1h-1zM635.41 319.2h1v1h-1zM635.41 328.66h1v1h-1zM635.41 338.11h1v1h-1zM635.41 347.57h1v1h-1zM635.41 357.03h1v1h-1zM635.41 366.48h1v1h-1zM635.41 375.94h1v1h-1zM635.41 385.4h1v1h-1zM635.41 394.85h1v1h-1zM635.41 404.31h1v1h-1zM635.41 413.77h1v1h-1zM635.41 423.23h1v1h-1zM635.41 432.68h1v1h-1zM635.41 442.14h1v1h-1zM635.41 451.6h1v1h-1zM635.41 461.05h1v1h-1zM635.41 470.51h1v1h-1zM635.41 479.97h1v1h-1zM635.41 489.42h1v1h-1zM635.41 498.88h1v1h-1zM635.41 508.34h1v1h-1zM635.41 517.8h1v1h-1zM635.41 527.25h1v1h-1zM635.41 536.71h1v1h-1zM635.41 546.17h1v1h-1zM644.86 158.43h1v1h-1zM644.86 167.89h1v1h-1zM644.86 177.34h1v1h-1zM644.86 186.8h1v1h-1zM644.86 196.26h1v1h-1zM644.86 205.71h1v1h-1zM644.86 215.17h1v1h-1zM644.86 224.63h1v1h-1zM644.86 234.09h1v1h-1zM644.86 243.54h1v1h-1zM644.86 253h1v1h-1zM644.86 262.46h1v1h-1zM644.86 271.91h1v1h-1zM644.86 281.37h1v1h-1zM644.86 290.83h1v1h-1zM644.86 300.28h1v1h-1zM644.86 309.74h1v1h-1zM644.86 319.2h1v1h-1zM644.86 328.66h1v1h-1zM644.86 338.11h1v1h-1zM644.86 347.57h1v1h-1zM644.86 357.03h1v1h-1zM644.86 366.48h1v1h-1zM644.86 375.94h1v1h-1zM644.86 385.4h1v1h-1zM644.86 394.85h1v1h-1zM644.86 404.31h1v1h-1zM644.86 413.77h1v1h-1zM644.86 423.23h1v1h-1zM644.86 432.68h1v1h-1zM644.86 442.14h1v1h-1zM644.86 451.6h1v1h-1zM644.86 461.05h1v1h-1zM644.86 470.51h1v1h-1zM644.86 479.97h1v1h-1zM644.86 489.42h1v1h-1zM644.86 498.88h1v1h-1zM644.86 508.34h1v1h-1zM644.86 517.8h1v1h-1zM644.86 527.25h1v1h-1zM644.86 536.71h1v1h-1zM644.86 546.17h1v1h-1zM654.32 158.43h1v1h-1zM654.32 167.89h1v1h-1zM654.32 177.34h1v1h-1zM654.32 186.8h1v1h-1zM654.32 196.26h1v1h-1zM654.32 205.71h1v1h-1zM654.32 215.17h1v1h-1zM654.32 224.63h1v1h-1zM654.32 234.09h1v1h-1zM654.32 243.54h1v1h-1zM654.32 253h1v1h-1zM654.32 262.46h1v1h-1zM654.32 271.91h1v1h-1zM654.32 281.37h1v1h-1zM654.32 290.83h1v1h-1zM654.32 300.28h1v1h-1zM654.32 309.74h1v1h-1zM654.32 319.2h1v1h-1zM654.32 328.66h1v1h-1zM654.32 338.11h1v1h-1zM654.32 347.57h1v1h-1zM654.32 357.03h1v1h-1zM654.32 366.48h1v1h-1zM654.32 375.94h1v1h-1zM654.32 385.4h1v1h-1zM654.32 394.85h1v1h-1zM654.32 404.31h1v1h-1zM654.32 413.77h1v1h-1zM654.32 423.23h1v1h-1zM654.32 432.68h1v1h-1zM654.32 442.14h1v1h-1zM654.32 451.6h1v1h-1zM654.32 461.05h1v1h-1zM654.32 470.51h1v1h-1zM654.32 479.97h1v1h-1zM654.32 489.42h1v1h-1zM654.32 498.88h1v1h-1zM654.32 508.34h1v1h-1zM654.32 517.8h1v1h-1zM654.32 527.25h1v1h-1zM654.32 536.71h1v1h-1zM654.32 546.17h1v1h-1zM663.78 158.43h1v1h-1zM663.78 167.89h1v1h-1zM663.78 177.34h1v1h-1zM663.78 186.8h1v1h-1zM663.78 196.26h1v1h-1zM663.78 205.71h1v1h-1zM663.78 215.17h1v1h-1zM663.78 224.63h1v1h-1zM663.78 234.09h1v1h-1zM663.78 243.54h1v1h-1zM663.78 253h1v1h-1zM663.78 262.46h1v1h-1zM663.78 271.91h1v1h-1zM663.78 281.37h1v1h-1zM663.78 290.83h1v1h-1zM663.78 300.28h1v1h-1zM663.78 309.74h1v1h-1zM663.78 319.2h1v1h-1zM663.78 328.66h1v1h-1zM663.78 338.11h1v1h-1zM663.78 347.57h1v1h-1zM663.78 357.03h1v1h-1zM663.78 366.48h1v1h-1zM663.78 375.94h1v1h-1zM663.78 385.4h1v1h-1zM663.78 394.85h1v1h-1zM663.78 404.31h1v1h-1zM663.78 413.77h1v1h-1zM663.78 423.23h1v1h-1zM663.78 432.68h1v1h-1zM663.78 442.14h1v1h-1zM663.78 451.6h1v1h-1zM663.78 461.05h1v1h-1zM663.78 470.51h1v1h-1zM663.78 479.97h1v1h-1zM663.78 489.42h1v1h-1zM663.78 498.88h1v1h-1zM663.78 508.34h1v1h-1zM663.78 517.8h1v1h-1zM663.78 527.25h1v1h-1zM663.78 536.71h1v1h-1zM663.78 546.17h1v1h-1zM673.23 158.43h1v1h-1zM673.23 167.89h1v1h-1zM673.23 177.34h1v1h-1zM673.23 186.8h1v1h-1zM673.23 196.26h1v1h-1zM673.23 205.71h1v1h-1zM673.23 215.17h1v1h-1zM673.23 224.63h1v1h-1zM673.23 234.09h1v1h-1zM673.23 243.54h1v1h-1zM673.23 253h1v1h-1zM673.23 262.46h1v1h-1zM673.23 271.91h1v1h-1zM673.23 281.37h1v1h-1zM673.23 290.83h1v1h-1zM673.23 300.28h1v1h-1zM673.23 309.74h1v1h-1zM673.23 319.2h1v1h-1zM673.23 328.66h1v1h-1zM673.23 338.11h1v1h-1zM673.23 347.57h1v1h-1zM673.23 357.03h1v1h-1zM673.23 366.48h1v1h-1zM673.23 375.94h1v1h-1zM673.23 385.4h1v1h-1zM673.23 394.85h1v1h-1zM673.23 404.31h1v1h-1zM673.23 413.77h1v1h-1zM673.23 423.23h1v1h-1zM673.23 432.68h1v1h-1zM673.23 442.14h1v1h-1zM673.23 451.6h1v1h-1zM673.23 461.05h1v1h-1zM673.23 470.51h1v1h-1zM673.23 479.97h1v1h-1zM673.23 489.42h1v1h-1zM673.23 498.88h1v1h-1zM673.23 508.34h1v1h-1zM673.23 517.8h1v1h-1zM673.23 527.25h1v1h-1zM673.23 536.71h1v1h-1zM673.23 546.17h1v1h-1zM682.69 158.43h1v1h-1zM682.69 167.89h1v1h-1zM682.69 177.34h1v1h-1zM682.69 186.8h1v1h-1zM682.69 196.26h1v1h-1zM682.69 205.71h1v1h-1zM682.69 215.17h1v1h-1zM682.69 224.63h1v1h-1zM682.69 234.09h1v1h-1zM682.69 243.54h1v1h-1zM682.69 253h1v1h-1zM682.69 262.46h1v1h-1zM682.69 271.91h1v1h-1zM682.69 281.37h1v1h-1zM682.69 290.83h1v1h-1zM682.69 300.28h1v1h-1zM682.69 309.74h1v1h-1zM682.69 319.2h1v1h-1zM682.69 328.66h1v1h-1zM682.69 338.11h1v1h-1zM682.69 347.57h1v1h-1zM682.69 357.03h1v1h-1zM682.69 366.48h1v1h-1zM682.69 375.94h1v1h-1zM682.69 385.4h1v1h-1zM682.69 394.85h1v1h-1zM682.69 404.31h1v1h-1zM682.69 413.77h1v1h-1zM682.69 423.23h1v1h-1zM682.69 432.68h1v1h-1zM682.69 442.14h1v1h-1zM682.69 451.6h1v1h-1zM682.69 461.05h1v1h-1zM682.69 470.51h1v1h-1zM682.69 479.97h1v1h-1zM682.69 489.42h1v1h-1zM682.69 498.88h1v1h-1zM682.69 508.34h1v1h-1zM682.69 517.8h1v1h-1zM682.69 527.25h1v1h-1zM682.69 536.71h1v1h-1zM682.69 546.17h1v1h-1zM692.15 158.43h1v1h-1zM692.15 167.89h1v1h-1zM692.15 177.34h1v1h-1zM692.15 186.8h1v1h-1zM692.15 196.26h1v1h-1zM692.15 205.71h1v1h-1zM692.15 215.17h1v1h-1zM692.15 224.63h1v1h-1zM692.15 234.09h1v1h-1zM692.15 243.54h1v1h-1zM692.15 253h1v1h-1zM692.15 262.46h1v1h-1zM692.15 271.91h1v1h-1zM692.15 281.37h1v1h-1zM692.15 290.83h1v1h-1zM692.15 300.28h1v1h-1zM692.15 309.74h1v1h-1zM692.15 319.2h1v1h-1zM692.15 328.66h1v1h-1zM692.15 338.11h1v1h-1zM692.15 347.57h1v1h-1zM692.15 357.03h1v1h-1zM692.15 366.48h1v1h-1zM692.15 375.94h1v1h-1zM692.15 385.4h1v1h-1zM692.15 394.85h1v1h-1zM692.15 404.31h1v1h-1zM692.15 413.77h1v1h-1zM692.15 423.23h1v1h-1zM692.15 432.68h1v1h-1zM692.15 442.14h1v1h-1zM692.15 451.6h1v1h-1zM692.15 461.05h1v1h-1zM692.15 470.51h1v1h-1zM692.15 479.97h1v1h-1zM692.15 489.42h1v1h-1zM692.15 498.88h1v1h-1zM692.15 508.34h1v1h-1zM692.15 517.8h1v1h-1zM692.15 527.25h1v1h-1zM692.15 536.71h1v1h-1zM692.15 546.17h1v1h-1zM701.61 158.43h1v1h-1zM701.61 167.89h1v1h-1zM701.61 177.34h1v1h-1zM701.61 186.8h1v1h-1zM701.61 196.26h1v1h-1zM701.61 205.71h1v1h-1zM701.61 215.17h1v1h-1zM701.61 224.63h1v1h-1zM701.61 234.09h1v1h-1zM701.61 243.54h1v1h-1zM701.61 253h1v1h-1zM701.61 262.46h1v1h-1zM701.61 271.91h1v1h-1zM701.61 281.37h1v1h-1zM701.61 290.83h1v1h-1zM701.61 300.28h1v1h-1zM701.61 309.74h1v1h-1zM701.61 319.2h1v1h-1zM701.61 328.66h1v1h-1zM701.61 338.11h1v1h-1zM701.61 347.57h1v1h-1zM701.61 357.03h1v1h-1zM701.61 366.48h1v1h-1zM701.61 375.94h1v1h-1zM701.61 385.4h1v1h-1zM701.61 394.85h1v1h-1zM701.61 404.31h1v1h-1zM701.61 413.77h1v1h-1zM701.61 423.23h1v1h-1zM701.61 432.68h1v1h-1zM701.61 442.14h1v1h-1zM701.61 451.6h1v1h-1zM701.61 461.05h1v1h-1zM701.61 470.51h1v1h-1zM701.61 479.97h1v1h-1zM701.61 489.42h1v1h-1zM701.61 498.88h1v1h-1zM701.61 508.34h1v1h-1zM701.61 517.8h1v1h-1zM701.61 527.25h1v1h-1zM701.61 536.71h1v1h-1zM701.61 546.17h1v1h-1zM711.06 158.43h1v1h-1zM711.06 167.89h1v1h-1zM711.06 177.34h1v1h-1zM711.06 186.8h1v1h-1zM711.06 196.26h1v1h-1zM711.06 205.71h1v1h-1zM711.06 215.17h1v1h-1zM711.06 224.63h1v1h-1zM711.06 234.09h1v1h-1zM711.06 243.54h1v1h-1zM711.06 253h1v1h-1zM711.06 262.46h1v1h-1zM711.06 271.91h1v1h-1zM711.06 281.37h1v1h-1zM711.06 290.83h1v1h-1zM711.06 300.28h1v1h-1zM711.06 309.74h1v1h-1zM711.06 319.2h1v1h-1zM711.06 328.66h1v1h-1zM711.06 338.11h1v1h-1zM711.06 347.57h1v1h-1zM711.06 357.03h1v1h-1zM711.06 366.48h1v1h-1zM711.06 375.94h1v1h-1zM711.06 385.4h1v1h-1zM711.06 394.85h1v1h-1zM711.06 404.31h1v1h-1zM711.06 413.77h1v1h-1zM711.06 423.23h1v1h-1zM711.06 432.68h1v1h-1zM711.06 442.14h1v1h-1zM711.06 451.6h1v1h-1zM711.06 461.05h1v1h-1zM711.06 470.51h1v1h-1zM711.06 479.97h1v1h-1zM711.06 489.42h1v1h-1zM711.06 498.88h1v1h-1zM711.06 508.34h1v1h-1zM711.06 517.8h1v1h-1zM711.06 527.25h1v1h-1zM711.06 536.71h1v1h-1zM711.06 546.17h1v1h-1zM39.62 158.43h1v1h-1zM39.62 167.89h1v1h-1zM39.62 177.34h1v1h-1zM39.62 186.8h1v1h-1zM39.62 196.26h1v1h-1zM39.62 205.71h1v1h-1zM39.62 215.17h1v1h-1zM39.62 224.63h1v1h-1zM39.62 234.09h1v1h-1zM39.62 243.54h1v1h-1zM39.62 253h1v1h-1zM39.62 262.46h1v1h-1zM39.62 271.91h1v1h-1zM39.62 281.37h1v1h-1zM39.62 290.83h1v1h-1zM39.62 300.28h1v1h-1zM39.62 309.74h1v1h-1zM39.62 319.2h1v1h-1zM39.62 328.66h1v1h-1zM39.62 338.11h1v1h-1zM39.62 347.57h1v1h-1zM39.62 357.03h1v1h-1zM39.62 366.48h1v1h-1zM39.62 375.94h1v1h-1zM39.62 385.4h1v1h-1zM39.62 394.85h1v1h-1zM39.62 404.31h1v1h-1zM39.62 413.77h1v1h-1zM39.62 423.23h1v1h-1zM39.62 432.68h1v1h-1zM39.62 442.14h1v1h-1zM39.62 451.6h1v1h-1zM39.62 461.05h1v1h-1zM39.62 470.51h1v1h-1zM39.62 479.97h1v1h-1zM39.62 489.42h1v1h-1zM39.62 498.88h1v1h-1zM39.62 508.34h1v1h-1zM39.62 517.8h1v1h-1zM39.62 527.25h1v1h-1zM39.62 536.71h1v1h-1zM39.62 546.17h1v1h-1zM49.07 158.43h1v1h-1zM49.07 167.89h1v1h-1zM49.07 177.34h1v1h-1zM49.07 186.8h1v1h-1zM49.07 196.26h1v1h-1zM49.07 205.71h1v1h-1zM49.07 215.17h1v1h-1zM49.07 224.63h1v1h-1zM49.07 234.09h1v1h-1zM49.07 243.54h1v1h-1zM49.07 253h1v1h-1zM49.07 262.46h1v1h-1zM49.07 271.91h1v1h-1zM49.07 281.37h1v1h-1zM49.07 290.83h1v1h-1zM49.07 300.28h1v1h-1zM49.07 309.74h1v1h-1zM49.07 319.2h1v1h-1zM49.07 328.66h1v1h-1zM49.07 338.11h1v1h-1zM49.07 347.57h1v1h-1zM49.07 357.03h1v1h-1zM49.07 366.48h1v1h-1zM49.07 375.94h1v1h-1zM49.07 385.4h1v1h-1zM49.07 394.85h1v1h-1zM49.07 404.31h1v1h-1zM49.07 413.77h1v1h-1zM49.07 423.23h1v1h-1zM49.07 432.68h1v1h-1zM49.07 442.14h1v1h-1zM49.07 451.6h1v1h-1zM49.07 461.05h1v1h-1zM49.07 470.51h1v1h-1zM49.07 479.97h1v1h-1zM49.07 489.42h1v1h-1zM49.07 498.88h1v1h-1zM49.07 508.34h1v1h-1zM49.07 517.8h1v1h-1zM49.07 527.25h1v1h-1zM49.07 536.71h1v1h-1zM49.07 546.17h1v1h-1zM58.53 158.43h1v1h-1zM58.53 167.89h1v1h-1zM58.53 177.34h1v1h-1zM58.53 186.8h1v1h-1zM58.53 196.26h1v1h-1zM58.53 205.71h1v1h-1zM58.53 215.17h1v1h-1zM58.53 224.63h1v1h-1zM58.53 234.09h1v1h-1zM58.53 243.54h1v1h-1zM58.53 253h1v1h-1zM58.53 262.46h1v1h-1zM58.53 271.91h1v1h-1zM58.53 281.37h1v1h-1zM58.53 290.83h1v1h-1zM58.53 300.28h1v1h-1zM58.53 309.74h1v1h-1zM58.53 319.2h1v1h-1zM58.53 328.66h1v1h-1zM58.53 338.11h1v1h-1zM58.53 347.57h1v1h-1zM58.53 357.03h1v1h-1zM58.53 366.48h1v1h-1zM58.53 375.94h1v1h-1zM58.53 385.4h1v1h-1zM58.53 394.85h1v1h-1zM58.53 404.31h1v1h-1zM58.53 413.77h1v1h-1zM58.53 423.23h1v1h-1zM58.53 432.68h1v1h-1zM58.53 442.14h1v1h-1zM58.53 451.6h1v1h-1zM58.53 461.05h1v1h-1zM58.53 470.51h1v1h-1zM58.53 479.97h1v1h-1zM58.53 489.42h1v1h-1zM58.53 498.88h1v1h-1zM58.53 508.34h1v1h-1zM58.53 517.8h1v1h-1zM58.53 527.25h1v1h-1zM58.53 536.71h1v1h-1zM58.53 546.17h1v1h-1zM67.99 158.43h1v1h-1zM67.99 167.89h1v1h-1zM67.99 177.34h1v1h-1zM67.99 186.8h1v1h-1zM67.99 196.26h1v1h-1zM67.99 205.71h1v1h-1zM67.99 215.17h1v1h-1zM67.99 224.63h1v1h-1zM67.99 234.09h1v1h-1zM67.99 243.54h1v1h-1zM67.99 253h1v1h-1zM67.99 262.46h1v1h-1zM67.99 271.91h1v1h-1zM67.99 281.37h1v1h-1zM67.99 290.83h1v1h-1zM67.99 300.28h1v1h-1zM67.99 309.74h1v1h-1zM67.99 319.2h1v1h-1zM67.99 328.66h1v1h-1zM67.99 338.11h1v1h-1zM67.99 347.57h1v1h-1zM67.99 357.03h1v1h-1zM67.99 366.48h1v1h-1zM67.99 375.94h1v1h-1zM67.99 385.4h1v1h-1zM67.99 394.85h1v1h-1zM67.99 404.31h1v1h-1zM67.99 413.77h1v1h-1zM67.99 423.23h1v1h-1zM67.99 432.68h1v1h-1zM67.99 442.14h1v1h-1zM67.99 451.6h1v1h-1zM67.99 461.05h1v1h-1zM67.99 470.51h1v1h-1zM67.99 479.97h1v1h-1zM67.99 489.42h1v1h-1zM67.99 498.88h1v1h-1zM67.99 508.34h1v1h-1zM67.99 517.8h1v1h-1zM67.99 527.25h1v1h-1zM67.99 536.71h1v1h-1zM67.99 546.17h1v1h-1zM729.98 158.43h1v1h-1zM729.98 167.89h1v1h-1zM729.98 177.34h1v1h-1zM729.98 186.8h1v1h-1zM729.98 196.26h1v1h-1zM729.98 205.71h1v1h-1zM729.98 215.17h1v1h-1zM729.98 224.63h1v1h-1zM729.98 234.09h1v1h-1zM729.98 243.54h1v1h-1zM729.98 253h1v1h-1zM729.98 262.46h1v1h-1zM729.98 271.91h1v1h-1zM729.98 281.37h1v1h-1zM729.98 290.83h1v1h-1zM729.98 300.28h1v1h-1zM729.98 309.74h1v1h-1zM729.98 319.2h1v1h-1zM729.98 328.66h1v1h-1zM729.98 338.11h1v1h-1zM729.98 347.57h1v1h-1zM729.98 357.03h1v1h-1zM729.98 366.48h1v1h-1zM729.98 375.94h1v1h-1zM729.98 385.4h1v1h-1zM729.98 394.85h1v1h-1zM729.98 404.31h1v1h-1zM729.98 413.77h1v1h-1zM729.98 423.23h1v1h-1zM729.98 432.68h1v1h-1zM729.98 442.14h1v1h-1zM729.98 451.6h1v1h-1zM729.98 461.05h1v1h-1zM729.98 470.51h1v1h-1zM729.98 479.97h1v1h-1zM729.98 489.42h1v1h-1zM729.98 498.88h1v1h-1zM729.98 508.34h1v1h-1zM729.98 517.8h1v1h-1zM729.98 527.25h1v1h-1zM729.98 536.71h1v1h-1zM729.98 546.17h1v1h-1zM739.43 158.43h1v1h-1zM739.43 167.89h1v1h-1zM739.43 177.34h1v1h-1zM739.43 186.8h1v1h-1zM739.43 196.26h1v1h-1zM739.43 205.71h1v1h-1zM739.43 215.17h1v1h-1zM739.43 224.63h1v1h-1zM739.43 234.09h1v1h-1zM739.43 243.54h1v1h-1zM739.43 253h1v1h-1zM739.43 262.46h1v1h-1zM739.43 271.91h1v1h-1zM739.43 281.37h1v1h-1zM739.43 290.83h1v1h-1zM739.43 300.28h1v1h-1zM739.43 309.74h1v1h-1zM739.43 319.2h1v1h-1zM739.43 328.66h1v1h-1zM739.43 338.11h1v1h-1zM739.43 347.57h1v1h-1zM739.43 357.03h1v1h-1zM739.43 366.48h1v1h-1zM739.43 375.94h1v1h-1zM739.43 385.4h1v1h-1zM739.43 394.85h1v1h-1zM739.43 404.31h1v1h-1zM739.43 413.77h1v1h-1zM739.43 423.23h1v1h-1zM739.43 432.68h1v1h-1zM739.43 442.14h1v1h-1zM739.43 451.6h1v1h-1zM739.43 461.05h1v1h-1zM739.43 470.51h1v1h-1zM739.43 479.97h1v1h-1zM739.43 489.42h1v1h-1zM739.43 498.88h1v1h-1zM739.43 508.34h1v1h-1zM739.43 517.8h1v1h-1zM739.43 527.25h1v1h-1zM739.43 536.71h1v1h-1zM739.43 546.17h1v1h-1zM748.89 158.43h1v1h-1zM748.89 167.89h1v1h-1zM748.89 177.34h1v1h-1zM748.89 186.8h1v1h-1zM748.89 196.26h1v1h-1zM748.89 205.71h1v1h-1zM748.89 215.17h1v1h-1zM748.89 224.63h1v1h-1zM748.89 234.09h1v1h-1zM748.89 243.54h1v1h-1zM748.89 253h1v1h-1zM748.89 262.46h1v1h-1zM748.89 271.91h1v1h-1zM748.89 281.37h1v1h-1zM748.89 290.83h1v1h-1zM748.89 300.28h1v1h-1zM748.89 309.74h1v1h-1zM748.89 319.2h1v1h-1zM748.89 328.66h1v1h-1zM748.89 338.11h1v1h-1zM748.89 347.57h1v1h-1zM748.89 357.03h1v1h-1zM748.89 366.48h1v1h-1zM748.89 375.94h1v1h-1zM748.89 385.4h1v1h-1zM748.89 394.85h1v1h-1zM748.89 404.31h1v1h-1zM748.89 413.77h1v1h-1zM748.89 423.23h1v1h-1zM748.89 432.68h1v1h-1zM748.89 442.14h1v1h-1zM748.89 451.6h1v1h-1zM748.89 461.05h1v1h-1zM748.89 470.51h1v1h-1zM748.89 479.97h1v1h-1zM748.89 489.42h1v1h-1zM748.89 498.88h1v1h-1zM748.89 508.34h1v1h-1zM748.89 517.8h1v1h-1zM748.89 527.25h1v1h-1zM748.89 536.71h1v1h-1zM748.89 546.17h1v1h-1zM758.35 158.43h1v1h-1zM758.35 167.89h1v1h-1zM758.35 177.34h1v1h-1zM758.35 186.8h1v1h-1zM758.35 196.26h1v1h-1zM758.35 205.71h1v1h-1zM758.35 215.17h1v1h-1zM758.35 224.63h1v1h-1zM758.35 234.09h1v1h-1zM758.35 243.54h1v1h-1zM758.35 253h1v1h-1zM758.35 262.46h1v1h-1zM758.35 271.91h1v1h-1zM758.35 281.37h1v1h-1zM758.35 290.83h1v1h-1zM758.35 300.28h1v1h-1zM758.35 309.74h1v1h-1zM758.35 319.2h1v1h-1zM758.35 328.66h1v1h-1zM758.35 338.11h1v1h-1zM758.35 347.57h1v1h-1zM758.35 357.03h1v1h-1zM758.35 366.48h1v1h-1zM758.35 375.94h1v1h-1zM758.35 385.4h1v1h-1zM758.35 394.85h1v1h-1zM758.35 404.31h1v1h-1zM758.35 413.77h1v1h-1zM758.35 423.23h1v1h-1zM758.35 432.68h1v1h-1zM758.35 442.14h1v1h-1zM758.35 451.6h1v1h-1zM758.35 461.05h1v1h-1zM758.35 470.51h1v1h-1zM758.35 479.97h1v1h-1zM758.35 489.42h1v1h-1zM758.35 498.88h1v1h-1zM758.35 508.34h1v1h-1zM758.35 517.8h1v1h-1zM758.35 527.25h1v1h-1zM758.35 536.71h1v1h-1zM758.35 546.17h1v1h-1z" fill="#6e6456" fill-opacity="0.8"/>
<path d="M84.9 156.43L89.9 161.43M89.9 156.43L84.9 161.43" stroke="#fff" stroke-width="2.4" opacity="0.6"/>
<path d="M84.9 260.46L89.9 265.46M89.9 260.46L84.9 265.46" stroke="#fff" stroke-width="2.4" opacity="0.6"/>
<path d="M84.9 298.28L89.9 303.28M89.9 298.28L84.9 303.28" stroke="#fff" stroke-width="2.4" opacity="0.6"/>
<path d="M84.9 383.4L89.9 388.4M89.9 383.4L84.9 388.4" stroke="#fff" stroke-width="2.4" opacity="0.6"/>
<path d="M84.9 459.05L89.9 464.05M89.9 459.05L84.9 464.05" stroke="#fff" stroke-width="2.4" opacity="0.6"/>
<path d="M84.9 534.71L89.9 539.71M89.9 534.71L84.9 539.71" stroke="#fff" stroke-width="2.4" opacity="0.6"/>
<path d="M709.06 156.43L714.06 161.43M714.06 156.43L709.06 161.43" stroke="#fff" stroke-width="2.4" opacity="0.6"/>
<path d="M709.06 232.09L714.06 237.09M714.06 232.09L709.06 237.09" stroke="#fff" stroke-width="2.4" opacity="0.6"/>
<path d="M709.06 307.74L714.06 312.74M714.06 307.74L709.06 312.74" stroke="#fff" stroke-width="2.4" opacity="0.6"/>
<path d="M709.06 383.4L714.06 388.4M714.06 383.4L709.06 388.4" stroke="#fff" stroke-width="2.4" opacity="0.6"/>
<path d="M709.06 459.05L714.06 464.05M714.06 459.05L709.06 464.05" stroke="#fff" stroke-width="2.4" opacity="0.6"/>
<path d="M709.06 534.71L714.06 539.71M714.06 534.71L709.06 539.71" stroke="#fff" stroke-width="2.4" opacity="0.6"/>
<path d="M226.76 222.63L231.76 227.63M231.76 222.63L226.76 227.63" stroke="#fff" stroke-width="2.4" opacity="0.6"/>
<path d="M302.41 222.63L307.41 227.63M307.41 222.63L302.41 227.63" stroke="#fff" stroke-width="2.4" opacity="0.6"/>
<path d="M302.41 241.54L307.41 246.54M307.41 241.54L302.41 246.54" stroke="#fff" stroke-width="2.4" opacity="0.6"/>
<path d="M226.76 279.37L231.76 284.37M231.76 279.37L226.76 284.37" stroke="#fff" stroke-width="2.4" opacity="0.6"/>
<path d="M302.41 279.37L307.41 284.37M307.41 279.37L302.41 284.37" stroke="#fff" stroke-width="2.4" opacity="0.6"/>
<path d="M302.41 298.28L307.41 303.28M307.41 298.28L302.41 303.28" stroke="#fff" stroke-width="2.4" opacity="0.6"/>
<path d="M359.15 232.09L364.15 237.09M364.15 232.09L359.15 237.09" stroke="#fff" stroke-width="2.4" opacity="0.6"/>
<path d="M359.15 288.83L364.15 293.83M364.15 288.83L359.15 293.83" stroke="#fff" stroke-width="2.4" opacity="0.6"/>
<path d="M378.07 251L383.07 256M383.07 251L378.07 256" stroke="#fff" stroke-width="2.4" opacity="0.6"/>
<path d="M378.07 269.91L383.07 274.91M383.07 269.91L378.07 274.91" stroke="#fff" stroke-width="2.4" opacity="0.6"/>
<path d="M434.81 260.46L439.81 265.46M439.81 260.46L434.81 265.46" stroke="#fff" stroke-width="2.4" opacity="0.6"/>
<path d="M529.38 260.46L534.38 265.46M534.38 260.46L529.38 265.46" stroke="#fff" stroke-width="2.4" opacity="0.6"/>
<path d="M77.94 158.93 L87.4 158.93" fill="none" stroke="#383838" stroke-width="1.7"/>
<path d="M77.94 262.96 L87.4 262.96" fill="none" stroke="#383838" stroke-width="1.7"/>
<path d="M77.94 300.78 L87.4 300.78" fill="none" stroke="#383838" stroke-width="1.7"/>
<path d="M77.94 385.9 L87.4 385.9" fill="none" stroke="#383838" stroke-width="1.7"/>
<path d="M77.94 461.55 L87.4 461.55" fill="none" stroke="#383838" stroke-width="1.7"/>
<path d="M77.94 537.21 L87.4 537.21" fill="none" stroke="#383838" stroke-width="1.7"/>
<path d="M711.56 158.93 L721.02 158.93" fill="none" stroke="#383838" stroke-width="1.7"/>
<path d="M711.56 234.59 L721.02 234.59" fill="none" stroke="#383838" stroke-width="1.7"/>
<path d="M711.56 310.24 L721.02 310.24" fill="none" stroke="#383838" stroke-width="1.7"/>
<path d="M711.56 385.9 L721.02 385.9" fill="none" stroke="#383838" stroke-width="1.7"/>
<path d="M711.56 461.55 L721.02 461.55" fill="none" stroke="#383838" stroke-width="1.7"/>
<path d="M711.56 537.21 L721.02 537.21" fill="none" stroke="#383838" stroke-width="1.7"/>
<path d="M219.8 225.13 L314.37 225.13" fill="none" stroke="#383838" stroke-width="1.7"/>
<path d="M87.4 262.96 L304.91 262.96 L304.91 244.04 L314.37 244.04" fill="none" stroke="#383838" stroke-width="1.7"/>
<path d="M219.8 281.87 L314.37 281.87" fill="none" stroke="#383838" stroke-width="1.7"/>
<path d="M87.4 300.78 L314.37 300.78" fill="none" stroke="#383838" stroke-width="1.7"/>
<path d="M352.2 234.59 L380.57 234.59 L380.57 253.5 L390.02 253.5" fill="none" stroke="#383838" stroke-width="1.7"/>
<path d="M352.2 291.33 L380.57 291.33 L380.57 272.41 L390.02 272.41" fill="none" stroke="#383838" stroke-width="1.7"/>
<path d="M427.85 262.96 L541.34 262.96" fill="none" stroke="#383838" stroke-width="1.7"/>
<rect x="40.12" y="140.02" width="37.83" height="37.83" rx="3" fill="#c4c4c4" stroke="#2a2a2a" stroke-width="1.5"/>
<text transform="translate(58.78 164.93) scale(1.04 1)" class="io">I1</text>
<rect x="40.12" y="244.04" width="37.83" height="37.83" rx="3" fill="#c4c4c4" stroke="#2a2a2a" stroke-width="1.5"/>
<text transform="translate(58.78 268.96) scale(1.04 1)" class="io">I2</text>
<rect x="40.12" y="281.87" width="37.83" height="37.83" rx="3" fill="#c4c4c4" stroke="#2a2a2a" stroke-width="1.5"/>
<text transform="translate(58.78 306.78) scale(1.04 1)" class="io">I3</text>
<rect x="40.12" y="366.98" width="37.83" height="37.83" rx="3" fill="#c4c4c4" stroke="#2a2a2a" stroke-width="1.5"/>
<text transform="translate(58.78 391.9) scale(1.04 1)" class="io">I4</text>
<rect x="40.12" y="442.64" width="37.83" height="37.83" rx="3" fill="#c4c4c4" stroke="#2a2a2a" stroke-width="1.5"/>
<text transform="translate(58.78 467.55) scale(1.04 1)" class="io">I5</text>
<rect x="40.12" y="518.3" width="37.83" height="37.83" rx="3" fill="#c4c4c4" stroke="#2a2a2a" stroke-width="1.5"/>
<text transform="translate(58.78 543.21) scale(1.04 1)" class="io">I6</text>
<rect x="721.02" y="140.02" width="37.83" height="37.83" rx="3" fill="#c4c4c4" stroke="#2a2a2a" stroke-width="1.5"/>
<text transform="translate(738.73 164.93) scale(1.04 1)" class="io">Q1</text>
<rect x="721.02" y="215.67" width="37.83" height="37.83" rx="3" fill="#c4c4c4" stroke="#2a2a2a" stroke-width="1.5"/>
<text transform="translate(738.73 240.59) scale(1.04 1)" class="io">Q2</text>
<rect x="721.02" y="291.33" width="37.83" height="37.83" rx="3" fill="#c4c4c4" stroke="#2a2a2a" stroke-width="1.5"/>
<text transform="translate(738.73 316.24) scale(1.04 1)" class="io">Q3</text>
<rect x="721.02" y="366.98" width="37.83" height="37.83" rx="3" fill="#c4c4c4" stroke="#2a2a2a" stroke-width="1.5"/>
<text transform="translate(738.73 391.9) scale(1.04 1)" class="io">Q4</text>
<rect x="721.02" y="442.64" width="37.83" height="37.83" rx="3" fill="#c4c4c4" stroke="#2a2a2a" stroke-width="1.5"/>
<text transform="translate(738.73 467.55) scale(1.04 1)" class="io">Q5</text>
<rect x="721.02" y="518.3" width="37.83" height="37.83" rx="3" fill="#c4c4c4" stroke="#2a2a2a" stroke-width="1.5"/>
<text transform="translate(738.73 543.21) scale(1.04 1)" class="io">Q6</text>
<rect x="314.37" y="215.67" width="37.83" height="37.83" rx="3" fill="#c4c4c4" stroke="#2a2a2a" stroke-width="1.5"/>
<text transform="translate(332.88 236.99) scale(0.93 1)" class="and">AND</text>
<rect x="314.37" y="272.41" width="37.83" height="37.83" rx="3" fill="#c4c4c4" stroke="#2a2a2a" stroke-width="1.5"/>
<text transform="translate(332.88 293.73) scale(0.93 1)" class="and">AND</text>
<rect x="390.02" y="244.04" width="37.83" height="37.83" rx="3" fill="#c4c4c4" stroke="#2a2a2a" stroke-width="1.5"/>
<text transform="translate(408.54 265.36) scale(0.93 1)" class="and">AND</text>
<path d="M136.69 215.67 L210.34 215.67 L219.8 225.13 L210.34 234.59 L136.69 234.59 Q134.69 234.59 134.69 232.59 L134.69 217.67 Q134.69 215.67 136.69 215.67 Z" fill="#fff" stroke="#333" stroke-width="1.6"/><text x="145" y="227.93" class="var">Variable1</text>
<path d="M136.69 272.41 L210.34 272.41 L219.8 281.87 L210.34 291.33 L136.69 291.33 Q134.69 291.33 134.69 289.33 L134.69 274.41 Q134.69 272.41 136.69 272.41 Z" fill="#fff" stroke="#333" stroke-width="1.6"/><text x="145" y="284.67" class="var">Variable3</text>
<path d="M550.79 253.5 L605.53 253.5 Q607.53 253.5 607.53 255.5 L607.53 270.41 Q607.53 272.41 605.53 272.41 L550.79 272.41 L541.34 262.96 Z" fill="#fff" stroke="#333" stroke-width="1.6"/><text x="560" y="265.71" class="var">Result</text>
<path d="M84.9 156.43L89.9 161.43M89.9 156.43L84.9 161.43" stroke="#5050ec" stroke-width="1.15"/>
<path d="M84.9 260.46L89.9 265.46M89.9 260.46L84.9 265.46" stroke="#5050ec" stroke-width="1.15"/>
<path d="M84.9 298.28L89.9 303.28M89.9 298.28L84.9 303.28" stroke="#5050ec" stroke-width="1.15"/>
<path d="M84.9 383.4L89.9 388.4M89.9 383.4L84.9 388.4" stroke="#5050ec" stroke-width="1.15"/>
<path d="M84.9 459.05L89.9 464.05M89.9 459.05L84.9 464.05" stroke="#5050ec" stroke-width="1.15"/>
<path d="M84.9 534.71L89.9 539.71M89.9 534.71L84.9 539.71" stroke="#5050ec" stroke-width="1.15"/>
<path d="M709.06 156.43L714.06 161.43M714.06 156.43L709.06 161.43" stroke="#5050ec" stroke-width="1.15"/>
<path d="M709.06 232.09L714.06 237.09M714.06 232.09L709.06 237.09" stroke="#5050ec" stroke-width="1.15"/>
<path d="M709.06 307.74L714.06 312.74M714.06 307.74L709.06 312.74" stroke="#5050ec" stroke-width="1.15"/>
<path d="M709.06 383.4L714.06 388.4M714.06 383.4L709.06 388.4" stroke="#5050ec" stroke-width="1.15"/>
<path d="M709.06 459.05L714.06 464.05M714.06 459.05L709.06 464.05" stroke="#5050ec" stroke-width="1.15"/>
<path d="M709.06 534.71L714.06 539.71M714.06 534.71L709.06 539.71" stroke="#5050ec" stroke-width="1.15"/>
<path d="M226.76 222.63L231.76 227.63M231.76 222.63L226.76 227.63" stroke="#5050ec" stroke-width="1.15"/>
<path d="M302.41 222.63L307.41 227.63M307.41 222.63L302.41 227.63" stroke="#5050ec" stroke-width="1.15"/>
<path d="M302.41 241.54L307.41 246.54M307.41 241.54L302.41 246.54" stroke="#5050ec" stroke-width="1.15"/>
<path d="M226.76 279.37L231.76 284.37M231.76 279.37L226.76 284.37" stroke="#5050ec" stroke-width="1.15"/>
<path d="M302.41 279.37L307.41 284.37M307.41 279.37L302.41 284.37" stroke="#5050ec" stroke-width="1.15"/>
<path d="M302.41 298.28L307.41 303.28M307.41 298.28L302.41 303.28" stroke="#5050ec" stroke-width="1.15"/>
<path d="M359.15 232.09L364.15 237.09M364.15 232.09L359.15 237.09" stroke="#5050ec" stroke-width="1.15"/>
<path d="M359.15 288.83L364.15 293.83M364.15 288.83L359.15 293.83" stroke="#5050ec" stroke-width="1.15"/>
<path d="M378.07 251L383.07 256M383.07 251L378.07 256" stroke="#5050ec" stroke-width="1.15"/>
<path d="M378.07 269.91L383.07 274.91M383.07 269.91L378.07 274.91" stroke="#5050ec" stroke-width="1.15"/>
<path d="M434.81 260.46L439.81 265.46M439.81 260.46L434.81 265.46" stroke="#5050ec" stroke-width="1.15"/>
<path d="M529.38 260.46L534.38 265.46M534.38 260.46L529.38 265.46" stroke="#5050ec" stroke-width="1.15"/>
</g>
<!-- scroll arrows -->
<path d="M774 159.9 L778 155.8 L782 159.9 Z" fill="#000"/>
<path d="M774 541 L778 545 L782 541 Z" fill="#000"/>
</svg>

<div class="a" style="left:130px;top:129px;font-size:12px;transform-origin:0 0;transform:scaleX(0.86)">100%</div>
<!-- bottom toolbar -->
<div class="a" style="left:601px;top:553px;width:195px;height:26px;background:#fdfdfd"></div>
<div class="a" style="left:696px;top:556px;width:95px;height:22px;background:#cce4f7"></div>
<div class="a" style="left:633px;top:560px;font-size:11.2px">Разделить</div>
<div class="a" style="left:723px;top:560px;font-size:11px">Объединить</div>

<!-- status bar -->
<div class="a" style="left:0;top:579.3px;width:796px;height:1.3px;background:#8c8c8c"></div>
<div class="a" style="left:0;top:580px;width:796px;height:20px;background:#f0f0f0"></div>
<div class="a" style="left:472px;top:581px;width:89px;height:19px;background:#f8f8f8"></div>
<div class="a" style="left:472px;top:581px;width:12px;height:19px;background:#107c10"></div>
<div class="a" style="left:481px;top:584px;font-size:11px">ЭСППЗУ: 13%</div>
<div class="a" style="left:583px;top:584px;font-size:11px">Прибор не подключен</div>
<div class="a" style="left:735px;top:584px;font-size:11px">COM6</div>
<div class="a" style="left:470px;top:581px;width:1px;height:19px;background:#c8c8c8"></div>
<div class="a" style="left:561px;top:581px;width:1px;height:19px;background:#c8c8c8"></div>
<div class="a" style="left:714px;top:581px;width:1px;height:19px;background:#c8c8c8"></div>
<div class="a" style="left:779px;top:581px;width:1px;height:19px;background:#c8c8c8"></div>

<svg width="796" height="600" viewBox="0 0 796 600" style="position:absolute;left:0;top:0">
<g fill="none" stroke-linejoin="miter">
<!-- app icon -->
<g stroke="#0e8f8a" stroke-width="1.3">
<path d="M10.4 5.8V7 M10.4 6.9 L13.8 10.4 L10.4 13.8 L7 10.4 Z M13.8 10.4 H15.2 M10.4 13.8 V17.4 H13.7"/>
<rect x="15.4" y="8.3" width="6.3" height="4.3" rx="1.5"/>
</g>
<rect x="15" y="13.9" width="7.1" height="7" rx="1.6" fill="#0e8f8a"/>
<path d="M16.8 15.7 L20.3 19.1 M20.3 15.7 L16.8 19.1" stroke="#fff" stroke-width="0.9" stroke-dasharray="1 0.7"/>

<!-- window controls -->
<path d="M679 14.5 H689" stroke="#808080" stroke-width="1"/>
<rect x="724.5" y="9.5" width="9" height="9" stroke="#808080" stroke-width="1"/>
<path d="M770 9 L780 19 M780 9 L770 19" stroke="#808080" stroke-width="1"/>

<!-- grips -->
<g fill="#8a8a8a" stroke="none">
<rect x="5" y="67" width="1.4" height="1.4"/><rect x="5" y="71" width="1.4" height="1.4"/><rect x="5" y="75" width="1.4" height="1.4"/><rect x="5" y="79" width="1.4" height="1.4"/>
<rect x="407" y="67" width="1.4" height="1.4"/><rect x="407" y="71" width="1.4" height="1.4"/><rect x="407" y="75" width="1.4" height="1.4"/><rect x="407" y="79" width="1.4" height="1.4"/>
<rect x="554.5" y="67" width="1.4" height="1.4"/><rect x="554.5" y="71" width="1.4" height="1.4"/><rect x="554.5" y="75" width="1.4" height="1.4"/><rect x="554.5" y="79" width="1.4" height="1.4"/>
</g>
<!-- separators -->
<g stroke="#c5c5c5" stroke-width="1">
<path d="M105.5 61 V87 M141.5 61 V87 M207.5 61 V87 M273.5 61 V87 M595 61 V87 M720.5 61 V87"/>
</g>

<g stroke="#595959" stroke-width="1.9">
<!-- new -->
<path d="M20.15 63 H33.4 L37 66.6 V84.85 H20.15 Z"/>
<!-- folder -->
<path d="M47.1 62 H56.8 L60 66.3 H68.8 V85.8 H47.1 Z" fill="#595959" stroke="none"/>
<rect x="49.1" y="67.9" width="17.9" height="16" fill="#fbfbfb" stroke="none"/>
<!-- save -->
<path d="M77 63 H96.6 L99 65.4 V84.85 H77 Z"/>
<path d="M82 84.85 V75 H93.9 V84.85"/>
<!-- print -->
<rect x="116" y="62" width="14.9" height="2.8" fill="#595959" stroke="none"/>
<path d="M116 79 H113 V66.9 H134 V79 H131.2"/>
<!-- undo/redo -->
<path d="M234.4 76.5 A7 6.5 0 0 0 221.5 73.2" stroke-width="2"/>
<path d="M266.1 73.2 A7 6.5 0 0 0 253.2 76.5" stroke-width="2" transform="translate(-4 0)"/>
<!-- info device -->
<path d="M324.1 63 H331.8 V84.8 H320 V79"/>
<path d="M329 65.2 V79.9 M322.3 81.9 H327.9" stroke-width="1.8"/>
<circle cx="317.75" cy="69.75" r="6.8"/>
<!-- settings device -->
<path d="M353 63 H361.9 V84.8 H350 V79"/>
<path d="M358.9 65.2 V79.9 M352.3 81.9 H357.9" stroke-width="1.8"/>
<!-- V table -->
<path d="M380.1 66.8 H392.9 V84.9 H375 V76.1"/>
<rect x="378.6" y="71.6" width="10.6" height="8.6" stroke-width="1.2"/>
<path d="M378 72.2 H389.7" stroke-width="1.6"/>
<path d="M382 72 V80.2 M385.7 72 V80.2 M378.6 76.7 H389.2" stroke-width="1.1"/>
<!-- Q icon -->
<rect x="485.25" y="74.95" width="15.9" height="9.8" rx="0.8"/>
<path d="M479 79.9 H484.3" stroke-width="1.6"/>
<path d="M478.9 77.9 V81.9" stroke-width="1.7"/>
<!-- 1234 -->
<rect x="518.2" y="63" width="21.7" height="21.7"/>
<path d="M529 67.1 V80.9" stroke-width="1.9"/>
<path d="M520.9 73.6 H536.9" stroke-width="1.1"/>
<!-- calendar -->
<rect x="566.2" y="66.2" width="21.7" height="18.5"/>
<path d="M570 62 V69.5 M576.9 62 V69.5 M583.9 62 V69.5" stroke-width="2"/>
<!-- V in -->
<path d="M610.4 75 H623.5 V84.5 H610.4 L606.3 79.8 Z"/>
<path d="M601.5 79.8 H606.3" stroke-width="1.6"/><path d="M601.8 77.8 V81.8" stroke-width="1.6"/>
<!-- V out -->
<path d="M632.2 75 H645.5 L650 79.8 L645.5 84.5 H632.2 Z"/>
<path d="M650 79.8 H654.5" stroke-width="1.6"/><path d="M653.9 77.8 V81.8" stroke-width="1.6"/>
<!-- C -->
<rect x="662.1" y="75" width="15.7" height="9.5" rx="0.8"/>
<path d="M678.8 79.9 H684" stroke-width="1.6"/><path d="M683.8 78 V82" stroke-width="1.6"/>
<!-- macro -->
<path d="M696 68 H693.2 V84.5 H713 V68 H710"/>
<rect x="696.2" y="63" width="13.7" height="9.8" rx="0.8"/>
<rect x="691" y="75.9" width="3.8" height="4" fill="#595959" stroke="none"/>
<!-- N in -->
<path d="M734.9 75.2 H749.4 V84.8 H734.9 Q733 84.8 731.8 80 Q733 75.2 734.9 75.2 Z"/>
<path d="M727.5 80 H731.8" stroke-width="1.6"/><path d="M728 78 V82" stroke-width="1.6"/>
<!-- N out -->
<path d="M758.2 75.2 H772.3 Q774.3 75.2 776.7 80 Q774.3 84.8 772.3 84.8 H758.2 Z"/>
<path d="M776.7 80 H781" stroke-width="1.6"/><path d="M780.2 78 V82" stroke-width="1.6"/>
</g>
<!-- undo/redo heads -->
<path d="M217.9 70.1 V76.9 H224.9 Z" fill="#595959"/>
<path d="M266.1 70.1 V76.9 H259.1 Z" fill="#595959"/>
<!-- teal parts -->
<g fill="#3a918a" stroke="none">
<path d="M31.2 63.9 H32.8 V68.1 H36 V69.7 H31.2 Z"/>
<rect x="81.1" y="66" width="12.8" height="3.9"/>
<path d="M422 64 L437.7 73.8 L422 83.6 Z"/>
<rect x="316.9" y="66" width="1.9" height="1.6"/>
<rect x="316.9" y="68.9" width="1.9" height="4.8"/>
</g>
<rect x="118" y="75" width="11" height="10" stroke="#3a918a" stroke-width="1.9"/>
<path d="M370.6 62.4 L375.4 73.6 L380.2 62.4" fill="none" stroke="#3a918a" stroke-width="2.5"/>
<path d="M612.9 62.6 L616.8 71.2 L620.7 62.6 M635 62.6 L638.9 71.2 L642.8 62.6" fill="none" stroke="#3a918a" stroke-width="2.1"/>
<!-- gear -->
<g transform="translate(347.5 69.5)">
<path fill="#3a918a" d="M-1.6 -7.5 H1.6 L2.2 -5.2 L4.3 -6.3 L6.3 -4.3 L5.2 -2.2 L7.5 -1.6 V1.6 L5.2 2.2 L6.3 4.3 L4.3 6.3 L2.2 5.2 L1.6 7.5 H-1.6 L-2.2 5.2 L-4.3 6.3 L-6.3 4.3 L-5.2 2.2 L-7.5 1.6 V-1.6 L-5.2 -2.2 L-6.3 -4.3 L-4.3 -6.3 L-2.2 -5.2 Z M-2.6 -2.6 V2.6 H2.6 V-2.6 Z" fill-rule="evenodd"/>
</g>
<!-- dropdown arrow -->
<path d="M502.9 72 H511.2 L507 75.9 Z" fill="#000"/>
<!-- text-like icon letters -->
<g font-family="Liberation Sans" font-weight="bold" text-anchor="middle">

<text x="492.9" y="71.3" font-size="12.5" fill="#3a918a">Q</text>

<text x="669.6" y="71.8" font-size="12.5" fill="#3a918a">C</text>
<text x="742.2" y="71.6" font-size="12.5" fill="#1c1ccc">N</text>
<text x="766.2" y="71.6" font-size="12.5" fill="#1c1ccc">N</text>
<text x="523.5" y="71.8" font-size="6.6" fill="#4a4a4a">1</text>
<text x="533.8" y="71.8" font-size="6.6" fill="#4a4a4a">2</text>
<text x="524" y="80.6" font-size="6.6" fill="#4a4a4a">3</text>
<text x="533.8" y="80.6" font-size="6.6" fill="#4a4a4a">4</text>
</g>
<text x="577" y="81.5" font-family="Liberation Sans" font-size="11.5" text-anchor="middle" fill="#5a5a5a">A</text>
<g stroke="#aab4c8" stroke-width="1">
<path d="M568.9 72.5 H573.9 M568.9 75.5 H573 M568.9 78.5 H572 M568.9 81.5 H570.4 M580 72.5 H585 M581.2 75.5 H585 M582.4 78.5 H585 M583.2 81.5 H584.8"/>
</g>

<!-- disabled icons -->
<g stroke="#c2c2c2" stroke-width="1.9">
<path d="M150 77.7 V63 H164.8"/>
<rect x="154.05" y="66.95" width="15.1" height="14.9" fill="#e6e6e6"/>
<!-- paste -->
<path d="M180.1 67.1 H184 M192.8 67.1 H196.7 V82.7" />
<path d="M180.1 67.1 V81.7 H188" />
<path d="M183.6 69.6 L185.5 64.5 A3 3 0 0 1 191.3 64.5 L193.2 69.6 Z" fill="#c2c2c2" stroke="none"/>
<rect x="181" y="68.5" width="14.8" height="13" fill="#e6e6e6" stroke="none"/>
<path d="M180.1 67.1 V81.7 M180.1 67.1 H196.7 V73" />
<rect x="184" y="67.1" width="8.8" height="2.6" fill="#c2c2c2" stroke="none"/>
<circle cx="188.4" cy="65.3" r="1.1" fill="#ececec" stroke="none"/>
<rect x="189.05" y="74.85" width="10.9" height="10.1" fill="#e6e6e6"/>
<!-- edit device -->
<path d="M289.1 72.4 V63 H301 V84.7 H290 V83" fill="#e6e6e6"/>
<path d="M297.85 65.2 V79.6 M291 81.85 H296.9" stroke-width="1.9"/>
<path d="M281.2 85.7 L282 82.07 L293.35 72.05 L296.25 75.35 L284.9 85.37 Z" fill="#c2c2c2" stroke="none"/>
<path d="M281.6 81.6 L285.5 85.2" stroke="#fbfbfb" stroke-width="0.9"/>
<!-- transfer -->
<path d="M458.2 65.5 V63 H469.8 V84.7 H458.2 V77" fill="#e6e6e6"/>
<path d="M467.1 65.2 V79.6 M460.1 81.85 H465.5"/>
<path d="M451 67.9 H462.8 M453.3 65 L450.5 67.9 L453.3 70.8 M450.3 73.7 H462.3 M459.5 70.8 L462.3 73.7 L459.5 76.6" stroke-width="1.7"/>
</g>

<!-- zoom toolbar -->
<rect x="33" y="125" width="22" height="21.7" fill="#cce8f8"/>
<g stroke="#555" fill="none">
<path d="M38.9 128.1 V143.7 M48.9 128.1 V143.7 M36.1 130.9 H51.9 M36.1 140.9 H51.9" stroke-width="2"/>
<path d="M42.4 128.1 V143.7 M45.4 128.1 V143.7 M36.1 134.4 H51.9 M36.1 137.4 H51.9" stroke-width="1.2"/>
</g>
<path d="M57.5 127 V145" stroke="#c8c8c8" stroke-width="1"/>
<g stroke="#5a5a5a" fill="none">
<circle cx="69.8" cy="133.8" r="5" stroke-width="1.5"/>
<path d="M74 138.2 L78.5 142.7" stroke-width="2.8"/>
<circle cx="114.25" cy="134.45" r="5.2" stroke-width="1.5"/>
<path d="M118.4 138.8 L122.8 142.2" stroke-width="2.8"/>
<path d="M86.9 133 V129.9 H90.5 M98.2 129.9 H101.1 V133 M86.9 138.4 V141.8 H90.5 M98.2 141.8 H101.1 V138.4" stroke-width="1.9"/>
</g>
<path d="M66.9 133.95 H71.9" stroke="#e01212" stroke-width="1.8"/>
<path d="M111.6 134.4 H116.6 M114.1 131.9 V136.9" stroke="#108a50" stroke-width="1.9"/>
<path d="M91.3 133.1 V139 M89.6 134.9 L91.3 133.4 M96.3 133.1 V139 M94.6 134.9 L96.3 133.4" stroke="#3a3a3a" stroke-width="1.15" fill="none"/><rect x="92.8" y="134.6" width="1.2" height="1.2" fill="#3a3a3a"/><rect x="92.8" y="137.7" width="1.2" height="1.2" fill="#3a3a3a"/>
<rect x="127.5" y="125.5" width="59" height="21" fill="none" stroke="#cdcdcd" stroke-width="1"/>
<path d="M174 133.9 H182 L178 138 Z" fill="#000"/>

<!-- tab arrows / close -->
<path d="M756.4 102 V110 L751.7 106 Z" fill="#9a9a9a"/>
<path d="M768 102 V110 L772.3 106 Z" fill="#9a9a9a"/>
<path d="M782.4 103.5 L788.8 109.3 M788.8 103.5 L782.4 109.3" stroke="#111" stroke-width="2.1"/>

<!-- right grip -->
<g fill="#8a8a8a">
<rect x="790.3" y="317.5" width="1.5" height="1.5"/><rect x="790.3" y="321.5" width="1.5" height="1.5"/><rect x="790.3" y="325.5" width="1.5" height="1.5"/><rect x="790.3" y="329.5" width="1.5" height="1.5"/><rect x="790.3" y="333.5" width="1.5" height="1.5"/><rect x="790.3" y="337.5" width="1.5" height="1.5"/><rect x="790.3" y="341.5" width="1.5" height="1.5"/><rect x="790.3" y="345.5" width="1.5" height="1.5"/><rect x="790.3" y="349.5" width="1.5" height="1.5"/><rect x="790.3" y="353.5" width="1.5" height="1.5"/>
</g>

<!-- bottom buttons icons -->
<g stroke="#5a5a5a" stroke-width="1.7" fill="#fff">
<rect x="609.95" y="560.95" width="14.2" height="11.9"/>
<path d="M617 561 V573"/>
<rect x="700.05" y="560.95" width="13.9" height="11.9"/>
</g>
<g fill="#17898f">
<rect x="611" y="562" width="4.9" height="2"/><rect x="618.9" y="562" width="4.4" height="2"/>
<rect x="701" y="562" width="12.1" height="2.8"/>
</g>

<!-- warning icons -->
<g>
<path d="M574 585.3 L582 598.6 H565.9 Z" fill="#fcc800"/>
<rect x="573.3" y="589.1" width="1.5" height="4.6" fill="#3a3a5a"/><rect x="573.3" y="595.1" width="1.5" height="1.6" fill="#3a3a5a"/>
<path d="M727 585.4 L735 598.3 H719 Z" fill="#fcc800"/>
<rect x="726.3" y="589.1" width="1.5" height="4.6" fill="#3a3a5a"/><rect x="726.3" y="595.1" width="1.5" height="1.6" fill="#3a3a5a"/>
</g>
<g fill="#9a9a9a">
<rect x="790" y="590" width="1.2" height="1.2"/><rect x="790" y="593" width="1.2" height="1.2"/><rect x="787" y="593" width="1.2" height="1.2"/>
</g>
</g>
</svg>

</body></html>
